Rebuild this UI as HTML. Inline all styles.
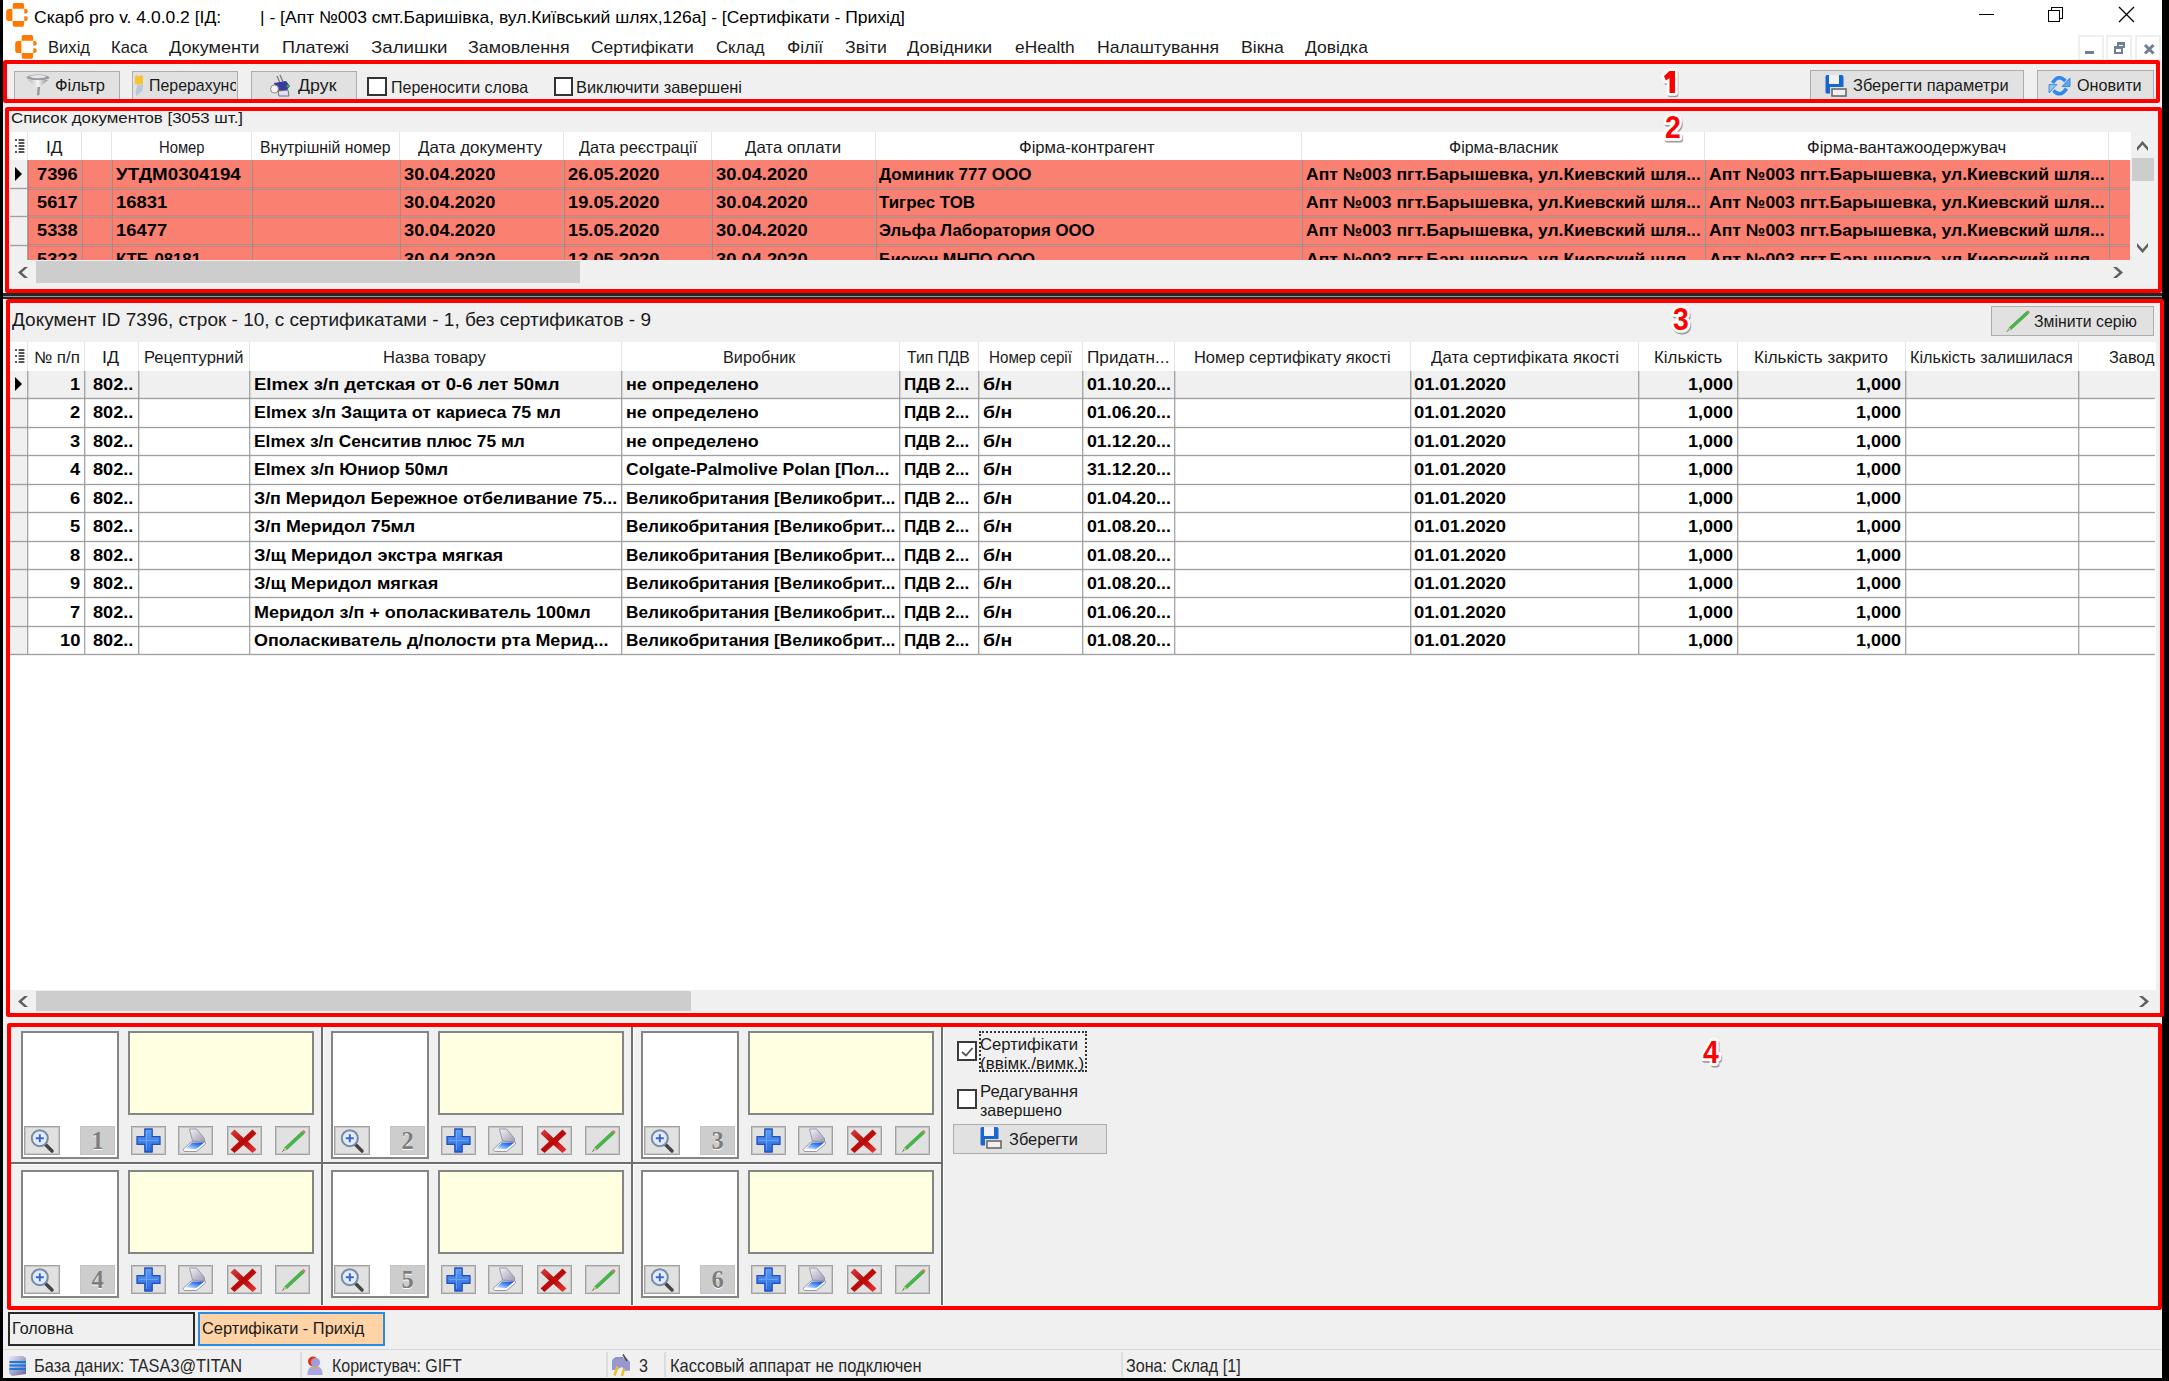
<!DOCTYPE html><html><head><meta charset="utf-8"><style>
html,body{margin:0;padding:0}
body{width:2169px;height:1381px;position:relative;overflow:hidden;background:#f0f0f0;font-family:"Liberation Sans",sans-serif}
.t{position:absolute;white-space:pre;transform-origin:0 0}
.lbl{position:absolute;font-family:"Liberation Sans",sans-serif;font-weight:700;font-size:31px;line-height:31px;color:#ff0000;z-index:60;
 text-shadow:-2px -2px 0 #fff,2px -2px 0 #fff,-2px 2px 0 #fff,2px 2px 0 #fff,0 -3px 0 #fff,0 3px 0 #fff,-3px 0 0 #fff,3px 0 0 #fff,1px 4px 1px #777}
svg{overflow:visible}
</style></head><body>

<div style="position:absolute;left:0px;top:0px;width:2169px;height:61px;background:#fff"></div>
<svg style="position:absolute;left:6px;top:3px" width="22" height="24" viewBox="0 0 22 24"><g fill="#ff7800"><path d="M6.5 5.8 L6.9 1.2 Q7.2 0 8.5 0 L16.3 0 Q17.6 0 17.9 1.2 L18.3 5.8 Z"/><path d="M6.5 18 L6.9 22.6 Q7.2 23.8 8.5 23.8 L16.3 23.8 Q17.6 23.8 17.9 22.6 L18.3 18 Z"/><path d="M6.4 5.9 L6.4 18 L2.6 18 Q0.2 18 0.2 15.5 L0.2 8.4 Q0.2 5.9 2.6 5.9 Z"/><path d="M18.3 5.9 L19.8 5.9 Q21.7 5.9 21.7 8.2 Q21.7 10.6 19.8 10.6 L18.3 10.6 Z"/><path d="M18.3 13.2 L19.8 13.2 Q21.7 13.2 21.7 15.6 Q21.7 17.9 19.8 17.9 L18.3 17.9 Z"/></g></svg>
<svg style="position:absolute;left:15px;top:35px" width="22" height="24" viewBox="0 0 22 24"><g fill="#ff7800"><path d="M6.5 5.8 L6.9 1.2 Q7.2 0 8.5 0 L16.3 0 Q17.6 0 17.9 1.2 L18.3 5.8 Z"/><path d="M6.5 18 L6.9 22.6 Q7.2 23.8 8.5 23.8 L16.3 23.8 Q17.6 23.8 17.9 22.6 L18.3 18 Z"/><path d="M6.4 5.9 L6.4 18 L2.6 18 Q0.2 18 0.2 15.5 L0.2 8.4 Q0.2 5.9 2.6 5.9 Z"/><path d="M18.3 5.9 L19.8 5.9 Q21.7 5.9 21.7 8.2 Q21.7 10.6 19.8 10.6 L18.3 10.6 Z"/><path d="M18.3 13.2 L19.8 13.2 Q21.7 13.2 21.7 15.6 Q21.7 17.9 19.8 17.9 L18.3 17.9 Z"/></g></svg>
<div class="t" style="left:34.0px;top:8.6px;font-size:17px;line-height:17px;font-weight:400;color:#000;transform:scaleX(1.0292)">Скарб pro v. 4.0.0.2 [ІД:        | - [Апт №003 смт.Баришівка, вул.Київський шлях,126а] - [Сертифікати - Прихід]</div>
<div style="position:absolute;left:1979px;top:14px;width:15px;height:1px;background:#000"></div>
<div style="position:absolute;left:2051px;top:7px;width:10px;height:10px;border:1px solid #000;"></div>
<div style="position:absolute;left:2048px;top:10px;width:10px;height:10px;border:1px solid #000;background:#fff"></div>
<svg style="position:absolute;left:2119px;top:7px" width="15" height="15" viewBox="0 0 15 15"><path d="M0 0 L15 15 M15 0 L0 15" stroke="#000" stroke-width="1.3"/></svg>
<div class="t" style="left:48.4px;top:38.7px;font-size:17px;line-height:17px;font-weight:400;color:#1a1a1a;transform:scaleX(0.9767)">Вихід</div>
<div class="t" style="left:111.3px;top:38.7px;font-size:17px;line-height:17px;font-weight:400;color:#1a1a1a;transform:scaleX(0.9759)">Каса</div>
<div class="t" style="left:169.4px;top:38.7px;font-size:17px;line-height:17px;font-weight:400;color:#1a1a1a;transform:scaleX(1.0648)">Документи</div>
<div class="t" style="left:282.4px;top:38.7px;font-size:17px;line-height:17px;font-weight:400;color:#1a1a1a;transform:scaleX(1.0617)">Платежі</div>
<div class="t" style="left:370.5px;top:38.7px;font-size:17px;line-height:17px;font-weight:400;color:#1a1a1a;transform:scaleX(1.0976)">Залишки</div>
<div class="t" style="left:468.0px;top:38.7px;font-size:17px;line-height:17px;font-weight:400;color:#1a1a1a;transform:scaleX(1.0485)">Замовлення</div>
<div class="t" style="left:591.2px;top:38.7px;font-size:17px;line-height:17px;font-weight:400;color:#1a1a1a;transform:scaleX(1.0270)">Сертифікати</div>
<div class="t" style="left:716.0px;top:38.7px;font-size:17px;line-height:17px;font-weight:400;color:#1a1a1a;transform:scaleX(0.9858)">Склад</div>
<div class="t" style="left:786.5px;top:38.7px;font-size:17px;line-height:17px;font-weight:400;color:#1a1a1a;transform:scaleX(1.0285)">Філії</div>
<div class="t" style="left:844.6px;top:38.7px;font-size:17px;line-height:17px;font-weight:400;color:#1a1a1a;transform:scaleX(1.0371)">Звіти</div>
<div class="t" style="left:907.0px;top:38.7px;font-size:17px;line-height:17px;font-weight:400;color:#1a1a1a;transform:scaleX(1.0665)">Довідники</div>
<div class="t" style="left:1014.7px;top:38.7px;font-size:17px;line-height:17px;font-weight:400;color:#1a1a1a;transform:scaleX(1.0188)">eHealth</div>
<div class="t" style="left:1097.0px;top:38.7px;font-size:17px;line-height:17px;font-weight:400;color:#1a1a1a;transform:scaleX(1.0383)">Налаштування</div>
<div class="t" style="left:1240.6px;top:38.7px;font-size:17px;line-height:17px;font-weight:400;color:#1a1a1a;transform:scaleX(1.0362)">Вікна</div>
<div class="t" style="left:1304.5px;top:38.7px;font-size:17px;line-height:17px;font-weight:400;color:#1a1a1a;transform:scaleX(1.0278)">Довідка</div>
<div style="position:absolute;left:2078px;top:35px;width:26px;height:26px;background:#fff;border:2px solid #efefef;box-sizing:border-box"></div>
<div style="position:absolute;left:2106px;top:35px;width:26px;height:26px;background:#fff;border:2px solid #efefef;box-sizing:border-box"></div>
<div style="position:absolute;left:2135px;top:35px;width:26px;height:26px;background:#fff;border:2px solid #efefef;box-sizing:border-box"></div>
<div style="position:absolute;left:2085px;top:51px;width:9px;height:3px;background:#708090"></div>
<div style="position:absolute;left:2117px;top:42px;width:8px;height:6px;border:2px solid #708090;border-top-width:3px;box-sizing:border-box"></div>
<div style="position:absolute;left:2113.5px;top:46px;width:9px;height:8px;border:2px solid #708090;border-top-width:3px;box-sizing:border-box;background:#fff"></div>
<svg style="position:absolute;left:2143.5px;top:43.5px" width="10.5" height="10.5" viewBox="0 0 10.5 10.5"><path d="M1 1 L9.5 9.5 M9.5 1 L1 9.5" stroke="#708090" stroke-width="3"/></svg>
<div style="position:absolute;left:3px;top:61px;width:2159px;height:42px;background:#f0f0f0"></div>
<div style="position:absolute;left:14px;top:71px;width:106px;height:39px;background:#e1e1e1;border:1px solid #adadad;box-sizing:border-box"></div>
<div style="position:absolute;left:132px;top:71px;width:106px;height:39px;background:#e1e1e1;border:1px solid #adadad;box-sizing:border-box"></div>
<div style="position:absolute;left:251px;top:71px;width:106px;height:39px;background:#e1e1e1;border:1px solid #adadad;box-sizing:border-box"></div>
<div class="t" style="left:55.2px;top:76.5px;font-size:17px;line-height:17px;font-weight:400;color:#1a1a1a;transform:scaleX(0.9708)">Фільтр</div>
<div style="position:absolute;left:133px;top:0;width:103px;height:1381px;overflow:hidden"><div style="position:absolute;left:-133px;top:0"><div class="t" style="left:149.4px;top:76.5px;font-size:17px;line-height:17px;font-weight:400;color:#1a1a1a;transform:scaleX(0.9360)">Перерахунок</div></div></div>
<div class="t" style="left:297.8px;top:76.5px;font-size:17px;line-height:17px;font-weight:400;color:#1a1a1a;transform:scaleX(1.0461)">Друк</div>
<div style="position:absolute;left:367px;top:77px;width:20px;height:19px;background:#fff;border:2px solid #333;box-sizing:border-box"></div>
<div class="t" style="left:390.5px;top:78.5px;font-size:16.5px;line-height:16.5px;font-weight:400;color:#1a1a1a;transform:scaleX(0.9696)">Переносити слова</div>
<div style="position:absolute;left:554px;top:77px;width:19px;height:19px;background:#fff;border:2px solid #333;box-sizing:border-box"></div>
<div class="t" style="left:576.0px;top:78.5px;font-size:16.5px;line-height:16.5px;font-weight:400;color:#1a1a1a;transform:scaleX(0.9922)">Виключити завершені</div>
<div style="position:absolute;left:1810px;top:70px;width:214px;height:40px;background:#e1e1e1;border:1px solid #adadad;box-sizing:border-box"></div>
<div style="position:absolute;left:2037px;top:70px;width:117px;height:40px;background:#e1e1e1;border:1px solid #adadad;box-sizing:border-box"></div>
<div class="t" style="left:1853.0px;top:76.5px;font-size:17px;line-height:17px;font-weight:400;color:#1a1a1a;transform:scaleX(0.9647)">Зберегти параметри</div>
<div class="t" style="left:2077.3px;top:76.5px;font-size:17px;line-height:17px;font-weight:400;color:#1a1a1a;transform:scaleX(0.9514)">Оновити</div>
<div style="position:absolute;left:3px;top:60px;width:2149px;height:35px;border:4px solid #ff0000;border-radius:2.5px;z-index:95"></div>
<svg style="position:absolute;left:1663.5px;top:70.7px;z-index:96" width="11" height="22" viewBox="0 0 11 22"><g transform="translate(0.8,1.8)" fill="#777" stroke="#888" stroke-width="5" stroke-linejoin="round" opacity="0.8"><path d="M5.5 0 L11 0 L11 22 L5.5 22 L5.5 7 L1.8 9.6 L0 5 Z"/></g><g fill="#ff0000" stroke="#fff" stroke-width="5.5" stroke-linejoin="round" paint-order="stroke"><path d="M5.5 0 L11 0 L11 22 L5.5 22 L5.5 7 L1.8 9.6 L0 5 Z"/></g></svg>
<svg style="position:absolute;left:26px;top:74px" width="24" height="22" viewBox="0 0 24 22"><defs><linearGradient id="fg" x1="0" x2="1"><stop offset="0" stop-color="#b8bcc0"/><stop offset="0.5" stop-color="#f4f4f4"/><stop offset="1" stop-color="#8c9094"/></linearGradient></defs><ellipse cx="12" cy="3.5" rx="11.5" ry="3" fill="#9a9ea2"/><ellipse cx="12" cy="2.6" rx="8" ry="1.6" fill="#e8e8e8"/><path d="M2 6 L11 14 L13 14 L22 6 Z" fill="url(#fg)"/><path d="M11.5 13 L14 13 L13.5 21 L11 21.5 Z" fill="#9a9a9a"/></svg>
<svg style="position:absolute;left:134.5px;top:75px" width="10" height="22" viewBox="0 0 10 22"><path d="M0 1 L2 0 L4 1.5 L6 0 L8 1 L8 9.5 L0 9.5 Z" fill="#f5c430"/><path d="M2.5 10 L8.5 10 L7 16 L1.5 21 L0.5 17 Z" fill="#b8c8dc"/></svg>
<svg style="position:absolute;left:270px;top:75px" width="22" height="22" viewBox="0 0 22 22"><path d="M7 1 L10 8 M10 0 L13 7" stroke="#777" stroke-width="1.2"/><path d="M4 8 L16 6 L20 11 L17 15 L6 16 Z" fill="#3a3aa0"/><ellipse cx="4.5" cy="14" rx="4" ry="4" fill="#f6f6f6" stroke="#888" stroke-width="1"/><path d="M8 16 L18 15 L19 21 L9 21 Z" fill="#e0e0f4" stroke="#555" stroke-width="0.8"/><circle cx="18" cy="11" r="1.6" fill="#20c020"/></svg>
<svg style="position:absolute;left:1825px;top:74.7px" width="22" height="22" viewBox="0 0 22 22"><path d="M0.5 1.5 Q0.5 0 2 0 L4 0 L4 9 L14 9 L14 0 L16.5 0 Q18.5 0 18.5 2 L18.5 12 L5 12 L5 18.5 L2 18.5 Q0.5 18.5 0.5 17 Z" fill="#1a66d0"/><rect x="4.2" y="0.3" width="9.6" height="8.5" fill="#f2f2f2"/><rect x="7" y="14" width="14" height="7" fill="#f0f0f0" stroke="#6a6a6a" stroke-width="1.6"/></svg>
<svg style="position:absolute;left:2049px;top:75px" width="22" height="22" viewBox="0 0 22 22"><path d="M3.5 8 Q9.5 -1.5 16.5 6" stroke="#2f88ee" stroke-width="3.6" fill="none"/><path d="M13 11.5 L21 11.5 L21 3 Z" fill="#5aa6f4" stroke="#2f7ee0" stroke-width="0.8"/><path d="M17.5 13.5 Q11.5 23 4.5 15.5" stroke="#2f88ee" stroke-width="3.6" fill="none"/><path d="M0 9.5 L8 9.5 L0 18 Z" fill="#8cc4f8" stroke="#2f7ee0" stroke-width="0.8"/></svg>
<div style="position:absolute;left:3px;top:103px;width:2159px;height:4px;background:#f0f0f0"></div>
<div style="position:absolute;left:9px;top:111px;width:2149px;height:178px;background:#f0f0f0"></div>
<div class="t" style="left:11.4px;top:109.7px;font-size:15.5px;line-height:15.5px;font-weight:400;color:#1a1a1a;transform:scaleX(1.0867)">Список документов [3053 шт.]</div>
<div style="position:absolute;left:10px;top:132px;width:2121px;height:28px;background:#fff"></div>
<div style="position:absolute;left:10px;top:160px;width:17px;height:100px;background:#f0f0f0"></div>
<div style="position:absolute;left:27px;top:160px;width:2103px;height:100px;background:#fa8072"></div>
<div style="position:absolute;left:27px;top:132px;width:1px;height:28px;background:#e5e5e5"></div>
<div style="position:absolute;left:81px;top:132px;width:1px;height:28px;background:#e5e5e5"></div>
<div style="position:absolute;left:111px;top:132px;width:1px;height:28px;background:#e5e5e5"></div>
<div style="position:absolute;left:251px;top:132px;width:1px;height:28px;background:#e5e5e5"></div>
<div style="position:absolute;left:399px;top:132px;width:1px;height:28px;background:#e5e5e5"></div>
<div style="position:absolute;left:563px;top:132px;width:1px;height:28px;background:#e5e5e5"></div>
<div style="position:absolute;left:711px;top:132px;width:1px;height:28px;background:#e5e5e5"></div>
<div style="position:absolute;left:875px;top:132px;width:1px;height:28px;background:#e5e5e5"></div>
<div style="position:absolute;left:1301px;top:132px;width:1px;height:28px;background:#e5e5e5"></div>
<div style="position:absolute;left:1704px;top:132px;width:1px;height:28px;background:#e5e5e5"></div>
<div style="position:absolute;left:2108px;top:132px;width:1px;height:28px;background:#e5e5e5"></div>
<div style="position:absolute;left:27px;top:160px;width:1px;height:100px;background:#a4a4a4"></div>
<div style="position:absolute;left:28px;top:160px;width:1px;height:100px;background:rgba(0,0,0,0.1)"></div>
<div style="position:absolute;left:81px;top:160px;width:1px;height:100px;background:#a4a4a4"></div>
<div style="position:absolute;left:82px;top:160px;width:1px;height:100px;background:rgba(0,0,0,0.1)"></div>
<div style="position:absolute;left:111px;top:160px;width:1px;height:100px;background:#a4a4a4"></div>
<div style="position:absolute;left:112px;top:160px;width:1px;height:100px;background:rgba(0,0,0,0.1)"></div>
<div style="position:absolute;left:251px;top:160px;width:1px;height:100px;background:#a4a4a4"></div>
<div style="position:absolute;left:252px;top:160px;width:1px;height:100px;background:rgba(0,0,0,0.1)"></div>
<div style="position:absolute;left:399px;top:160px;width:1px;height:100px;background:#a4a4a4"></div>
<div style="position:absolute;left:400px;top:160px;width:1px;height:100px;background:rgba(0,0,0,0.1)"></div>
<div style="position:absolute;left:563px;top:160px;width:1px;height:100px;background:#a4a4a4"></div>
<div style="position:absolute;left:564px;top:160px;width:1px;height:100px;background:rgba(0,0,0,0.1)"></div>
<div style="position:absolute;left:711px;top:160px;width:1px;height:100px;background:#a4a4a4"></div>
<div style="position:absolute;left:712px;top:160px;width:1px;height:100px;background:rgba(0,0,0,0.1)"></div>
<div style="position:absolute;left:875px;top:160px;width:1px;height:100px;background:#a4a4a4"></div>
<div style="position:absolute;left:876px;top:160px;width:1px;height:100px;background:rgba(0,0,0,0.1)"></div>
<div style="position:absolute;left:1301px;top:160px;width:1px;height:100px;background:#a4a4a4"></div>
<div style="position:absolute;left:1302px;top:160px;width:1px;height:100px;background:rgba(0,0,0,0.1)"></div>
<div style="position:absolute;left:1704px;top:160px;width:1px;height:100px;background:#a4a4a4"></div>
<div style="position:absolute;left:1705px;top:160px;width:1px;height:100px;background:rgba(0,0,0,0.1)"></div>
<div style="position:absolute;left:2108px;top:160px;width:1px;height:100px;background:#a4a4a4"></div>
<div style="position:absolute;left:2109px;top:160px;width:1px;height:100px;background:rgba(0,0,0,0.1)"></div>
<div style="position:absolute;left:10px;top:188px;width:2120px;height:1px;background:#a0a0a0"></div>
<div style="position:absolute;left:10px;top:187px;width:2120px;height:1px;background:rgba(0,0,0,0.06)"></div>
<div style="position:absolute;left:10px;top:189px;width:2120px;height:1px;background:rgba(0,0,0,0.06)"></div>
<div style="position:absolute;left:10px;top:216px;width:2120px;height:1px;background:#a0a0a0"></div>
<div style="position:absolute;left:10px;top:215px;width:2120px;height:1px;background:rgba(0,0,0,0.06)"></div>
<div style="position:absolute;left:10px;top:217px;width:2120px;height:1px;background:rgba(0,0,0,0.06)"></div>
<div style="position:absolute;left:10px;top:245px;width:2120px;height:1px;background:#a0a0a0"></div>
<div style="position:absolute;left:10px;top:244px;width:2120px;height:1px;background:rgba(0,0,0,0.06)"></div>
<div style="position:absolute;left:10px;top:246px;width:2120px;height:1px;background:rgba(0,0,0,0.06)"></div>
<div class="t" style="left:45.6px;top:139.2px;font-size:16.5px;line-height:16.5px;font-weight:400;color:#1a1a1a;transform:scaleX(1.0443)">ІД</div>
<div class="t" style="left:158.5px;top:139.2px;font-size:16.5px;line-height:16.5px;font-weight:400;color:#1a1a1a;transform:scaleX(0.8976)">Номер</div>
<div class="t" style="left:259.9px;top:139.2px;font-size:16.5px;line-height:16.5px;font-weight:400;color:#1a1a1a;transform:scaleX(0.9561)">Внутрішній номер</div>
<div class="t" style="left:418.4px;top:139.2px;font-size:16.5px;line-height:16.5px;font-weight:400;color:#1a1a1a;transform:scaleX(1.0256)">Дата документу</div>
<div class="t" style="left:578.7px;top:139.2px;font-size:16.5px;line-height:16.5px;font-weight:400;color:#1a1a1a;transform:scaleX(0.9875)">Дата реєстрації</div>
<div class="t" style="left:745.3px;top:139.2px;font-size:16.5px;line-height:16.5px;font-weight:400;color:#1a1a1a;transform:scaleX(1.0190)">Дата оплати</div>
<div class="t" style="left:1019.0px;top:139.2px;font-size:16.5px;line-height:16.5px;font-weight:400;color:#1a1a1a;transform:scaleX(1.0074)">Фірма-контрагент</div>
<div class="t" style="left:1448.6px;top:139.2px;font-size:16.5px;line-height:16.5px;font-weight:400;color:#1a1a1a;transform:scaleX(0.9698)">Фірма-власник</div>
<div class="t" style="left:1806.7px;top:139.2px;font-size:16.5px;line-height:16.5px;font-weight:400;color:#1a1a1a;transform:scaleX(1.0101)">Фірма-вантажоодержувач</div>
<div style="position:absolute;left:0;top:0;width:2169px;height:260px;overflow:hidden">
<div class="t" style="left:36.8px;top:165.6px;font-size:17px;line-height:17px;font-weight:700;color:#000;transform:scaleX(1.0714)">7396</div>
<div class="t" style="left:116.1px;top:165.6px;font-size:17px;line-height:17px;font-weight:700;color:#000;transform:scaleX(1.1044)">УТДМ0304194</div>
<div class="t" style="left:404.4px;top:165.6px;font-size:17px;line-height:17px;font-weight:700;color:#000;transform:scaleX(1.0729)">30.04.2020</div>
<div class="t" style="left:567.9px;top:165.6px;font-size:17px;line-height:17px;font-weight:700;color:#000;transform:scaleX(1.0740)">26.05.2020</div>
<div class="t" style="left:716.3px;top:165.6px;font-size:17px;line-height:17px;font-weight:700;color:#000;transform:scaleX(1.0776)">30.04.2020</div>
<div class="t" style="left:879.0px;top:165.6px;font-size:17px;line-height:17px;font-weight:700;color:#000;transform:scaleX(1.0013)">Доминик 777 ООО</div>
<div class="t" style="left:1305.9px;top:165.6px;font-size:17px;line-height:17px;font-weight:700;color:#000;transform:scaleX(1.0327)">Апт №003 пгт.Барышевка, ул.Киевский шля...</div>
<div class="t" style="left:1708.6px;top:165.6px;font-size:17px;line-height:17px;font-weight:700;color:#000;transform:scaleX(1.0348)">Апт №003 пгт.Барышевка, ул.Киевский шля...</div>
<div class="t" style="left:36.8px;top:194.0px;font-size:17px;line-height:17px;font-weight:700;color:#000;transform:scaleX(1.0714)">5617</div>
<div class="t" style="left:116.1px;top:194.0px;font-size:17px;line-height:17px;font-weight:700;color:#000;transform:scaleX(1.0825)">16831</div>
<div class="t" style="left:404.4px;top:194.0px;font-size:17px;line-height:17px;font-weight:700;color:#000;transform:scaleX(1.0729)">30.04.2020</div>
<div class="t" style="left:567.9px;top:194.0px;font-size:17px;line-height:17px;font-weight:700;color:#000;transform:scaleX(1.0740)">19.05.2020</div>
<div class="t" style="left:716.3px;top:194.0px;font-size:17px;line-height:17px;font-weight:700;color:#000;transform:scaleX(1.0776)">30.04.2020</div>
<div class="t" style="left:879.0px;top:194.0px;font-size:17px;line-height:17px;font-weight:700;color:#000;transform:scaleX(0.9948)">Тигрес ТОВ</div>
<div class="t" style="left:1305.9px;top:194.0px;font-size:17px;line-height:17px;font-weight:700;color:#000;transform:scaleX(1.0327)">Апт №003 пгт.Барышевка, ул.Киевский шля...</div>
<div class="t" style="left:1708.6px;top:194.0px;font-size:17px;line-height:17px;font-weight:700;color:#000;transform:scaleX(1.0348)">Апт №003 пгт.Барышевка, ул.Киевский шля...</div>
<div class="t" style="left:36.8px;top:222.4px;font-size:17px;line-height:17px;font-weight:700;color:#000;transform:scaleX(1.0714)">5338</div>
<div class="t" style="left:116.1px;top:222.4px;font-size:17px;line-height:17px;font-weight:700;color:#000;transform:scaleX(1.0825)">16477</div>
<div class="t" style="left:404.4px;top:222.4px;font-size:17px;line-height:17px;font-weight:700;color:#000;transform:scaleX(1.0729)">30.04.2020</div>
<div class="t" style="left:567.9px;top:222.4px;font-size:17px;line-height:17px;font-weight:700;color:#000;transform:scaleX(1.0740)">15.05.2020</div>
<div class="t" style="left:716.3px;top:222.4px;font-size:17px;line-height:17px;font-weight:700;color:#000;transform:scaleX(1.0776)">30.04.2020</div>
<div class="t" style="left:879.0px;top:222.4px;font-size:17px;line-height:17px;font-weight:700;color:#000;transform:scaleX(0.9885)">Эльфа Лаборатория ООО</div>
<div class="t" style="left:1305.9px;top:222.4px;font-size:17px;line-height:17px;font-weight:700;color:#000;transform:scaleX(1.0327)">Апт №003 пгт.Барышевка, ул.Киевский шля...</div>
<div class="t" style="left:1708.6px;top:222.4px;font-size:17px;line-height:17px;font-weight:700;color:#000;transform:scaleX(1.0348)">Апт №003 пгт.Барышевка, ул.Киевский шля...</div>
<div class="t" style="left:36.8px;top:250.8px;font-size:17px;line-height:17px;font-weight:700;color:#000;transform:scaleX(1.0714)">5323</div>
<div class="t" style="left:116.1px;top:250.8px;font-size:17px;line-height:17px;font-weight:700;color:#000;transform:scaleX(0.9838)">КТБ-08181</div>
<div class="t" style="left:404.4px;top:250.8px;font-size:17px;line-height:17px;font-weight:700;color:#000;transform:scaleX(1.0729)">30.04.2020</div>
<div class="t" style="left:567.9px;top:250.8px;font-size:17px;line-height:17px;font-weight:700;color:#000;transform:scaleX(1.0740)">13.05.2020</div>
<div class="t" style="left:716.3px;top:250.8px;font-size:17px;line-height:17px;font-weight:700;color:#000;transform:scaleX(1.0776)">30.04.2020</div>
<div class="t" style="left:879.0px;top:250.8px;font-size:17px;line-height:17px;font-weight:700;color:#000;transform:scaleX(0.9571)">Биокон МНПО ООО</div>
<div class="t" style="left:1305.9px;top:250.8px;font-size:17px;line-height:17px;font-weight:700;color:#000;transform:scaleX(1.0327)">Апт №003 пгт.Барышевка, ул.Киевский шля...</div>
<div class="t" style="left:1708.6px;top:250.8px;font-size:17px;line-height:17px;font-weight:700;color:#000;transform:scaleX(1.0348)">Апт №003 пгт.Барышевка, ул.Киевский шля...</div>
</div>
<svg style="position:absolute;left:15px;top:167px" width="8" height="14" viewBox="0 0 8 14"><path d="M0 0 L7 7 L0 14 z" fill="#000"/></svg>
<svg style="position:absolute;left:15.5px;top:139.2px" width="9" height="14" viewBox="0 0 9 14"><g fill="#1e1e1e"><rect x="2.5" y="0.2" width="6" height="1.6" rx="0.6"/><rect x="2.5" y="3.2" width="6" height="1.6" rx="0.6"/><rect x="2.5" y="6.2" width="6" height="1.6" rx="0.6"/><rect x="2.5" y="9.2" width="6" height="1.6" rx="0.6"/><rect x="2.5" y="12.2" width="6" height="1.6" rx="0.6"/><circle cx="0" cy="1" r="1"/><circle cx="0" cy="7" r="1"/><circle cx="0" cy="13" r="1"/></g></svg>
<div style="position:absolute;left:10px;top:260px;width:2121px;height:28px;background:#f0f0f0"></div>
<div style="position:absolute;left:36px;top:261px;width:544px;height:22px;background:#cdcdcd"></div>
<svg style="position:absolute;left:17.5px;top:267px" width="10" height="11" viewBox="0 0 10 11"><polygon points="10,0 6.3,0 0,5.5 6.3,11 10,11 3.8,5.5" fill="#606060"/></svg>
<svg style="position:absolute;left:2113px;top:267px" width="10" height="11" viewBox="0 0 10 11"><polygon points="0,0 3.7,0 10,5.5 3.7,11 0,11 6.2,5.5" fill="#606060"/></svg>
<div style="position:absolute;left:2131px;top:132px;width:27px;height:128px;background:#f0f0f0"></div>
<div style="position:absolute;left:2132px;top:158px;width:22px;height:23px;background:#cdcdcd"></div>
<svg style="position:absolute;left:2137px;top:141px" width="11" height="10" viewBox="0 0 11 10"><polygon points="0,10 0,6.3 5.5,0 11,6.3 11,10 5.5,3.8" fill="#606060"/></svg>
<svg style="position:absolute;left:2137px;top:243px" width="11" height="10" viewBox="0 0 11 10"><polygon points="0,0 0,3.7 5.5,10 11,3.7 11,0 5.5,6.2" fill="#606060"/></svg>
<div style="position:absolute;left:5px;top:107px;width:2149px;height:178px;border:4px solid #ff0000;border-radius:2.5px;z-index:95"></div>
<svg style="position:absolute;left:1666px;top:116px;z-index:96" width="15" height="22" viewBox="0 0 15 22"><g transform="translate(0.8,1.8)" fill="#777" stroke="#888" stroke-width="5" stroke-linejoin="round" opacity="0.8"><text x="-1" y="22" font-family="Liberation Sans" font-weight="700" font-size="30.5" transform="scale(0.93,1)">2</text></g><g fill="#ff0000" stroke="#fff" stroke-width="5.5" stroke-linejoin="round" paint-order="stroke"><text x="-1" y="22" font-family="Liberation Sans" font-weight="700" font-size="30.5" transform="scale(0.93,1)">2</text></g></svg>
<div style="position:absolute;left:3px;top:293px;width:2159px;height:6px;background:#262626"></div>
<div style="position:absolute;left:3px;top:296px;width:2159px;height:1px;background:#999"></div>
<div style="position:absolute;left:10px;top:303px;width:2148px;height:710px;background:#f0f0f0"></div>
<div class="t" style="left:11.8px;top:311.6px;font-size:17.7px;line-height:17.7px;font-weight:400;color:#1a1a1a;transform:scaleX(1.0739)">Документ ID 7396, строк - 10, с сертификатами - 1, без сертификатов - 9</div>
<div style="position:absolute;left:1991px;top:306px;width:163px;height:30px;background:#e1e1e1;border:1px solid #adadad;box-sizing:border-box"></div>
<div class="t" style="left:2034.0px;top:312.9px;font-size:17px;line-height:17px;font-weight:400;color:#1a1a1a;transform:scaleX(0.9313)">Змінити серію</div>
<div style="position:absolute;left:10px;top:342px;width:2146px;height:648px;background:#fff"></div>
<div style="position:absolute;left:10px;top:371px;width:17px;height:284px;background:#f0f0f0"></div>
<div style="position:absolute;left:27px;top:371px;width:2129px;height:27px;background:#f0f0f0"></div>
<div style="position:absolute;left:27px;top:342px;width:1px;height:29px;background:#e5e5e5"></div>
<div style="position:absolute;left:27px;top:371px;width:1px;height:284px;background:#a8a8a8"></div>
<div style="position:absolute;left:28px;top:371px;width:1px;height:284px;background:rgba(0,0,0,0.12)"></div>
<div style="position:absolute;left:84px;top:342px;width:1px;height:29px;background:#e5e5e5"></div>
<div style="position:absolute;left:84px;top:371px;width:1px;height:284px;background:#a8a8a8"></div>
<div style="position:absolute;left:85px;top:371px;width:1px;height:284px;background:rgba(0,0,0,0.12)"></div>
<div style="position:absolute;left:138px;top:342px;width:1px;height:29px;background:#e5e5e5"></div>
<div style="position:absolute;left:138px;top:371px;width:1px;height:284px;background:#a8a8a8"></div>
<div style="position:absolute;left:139px;top:371px;width:1px;height:284px;background:rgba(0,0,0,0.12)"></div>
<div style="position:absolute;left:249px;top:342px;width:1px;height:29px;background:#e5e5e5"></div>
<div style="position:absolute;left:249px;top:371px;width:1px;height:284px;background:#a8a8a8"></div>
<div style="position:absolute;left:250px;top:371px;width:1px;height:284px;background:rgba(0,0,0,0.12)"></div>
<div style="position:absolute;left:621px;top:342px;width:1px;height:29px;background:#e5e5e5"></div>
<div style="position:absolute;left:621px;top:371px;width:1px;height:284px;background:#a8a8a8"></div>
<div style="position:absolute;left:622px;top:371px;width:1px;height:284px;background:rgba(0,0,0,0.12)"></div>
<div style="position:absolute;left:899px;top:342px;width:1px;height:29px;background:#e5e5e5"></div>
<div style="position:absolute;left:899px;top:371px;width:1px;height:284px;background:#a8a8a8"></div>
<div style="position:absolute;left:900px;top:371px;width:1px;height:284px;background:rgba(0,0,0,0.12)"></div>
<div style="position:absolute;left:978px;top:342px;width:1px;height:29px;background:#e5e5e5"></div>
<div style="position:absolute;left:978px;top:371px;width:1px;height:284px;background:#a8a8a8"></div>
<div style="position:absolute;left:979px;top:371px;width:1px;height:284px;background:rgba(0,0,0,0.12)"></div>
<div style="position:absolute;left:1082px;top:342px;width:1px;height:29px;background:#e5e5e5"></div>
<div style="position:absolute;left:1082px;top:371px;width:1px;height:284px;background:#a8a8a8"></div>
<div style="position:absolute;left:1083px;top:371px;width:1px;height:284px;background:rgba(0,0,0,0.12)"></div>
<div style="position:absolute;left:1174px;top:342px;width:1px;height:29px;background:#e5e5e5"></div>
<div style="position:absolute;left:1174px;top:371px;width:1px;height:284px;background:#a8a8a8"></div>
<div style="position:absolute;left:1175px;top:371px;width:1px;height:284px;background:rgba(0,0,0,0.12)"></div>
<div style="position:absolute;left:1410px;top:342px;width:1px;height:29px;background:#e5e5e5"></div>
<div style="position:absolute;left:1410px;top:371px;width:1px;height:284px;background:#a8a8a8"></div>
<div style="position:absolute;left:1411px;top:371px;width:1px;height:284px;background:rgba(0,0,0,0.12)"></div>
<div style="position:absolute;left:1638px;top:342px;width:1px;height:29px;background:#e5e5e5"></div>
<div style="position:absolute;left:1638px;top:371px;width:1px;height:284px;background:#a8a8a8"></div>
<div style="position:absolute;left:1639px;top:371px;width:1px;height:284px;background:rgba(0,0,0,0.12)"></div>
<div style="position:absolute;left:1737px;top:342px;width:1px;height:29px;background:#e5e5e5"></div>
<div style="position:absolute;left:1737px;top:371px;width:1px;height:284px;background:#a8a8a8"></div>
<div style="position:absolute;left:1738px;top:371px;width:1px;height:284px;background:rgba(0,0,0,0.12)"></div>
<div style="position:absolute;left:1905px;top:342px;width:1px;height:29px;background:#e5e5e5"></div>
<div style="position:absolute;left:1905px;top:371px;width:1px;height:284px;background:#a8a8a8"></div>
<div style="position:absolute;left:1906px;top:371px;width:1px;height:284px;background:rgba(0,0,0,0.12)"></div>
<div style="position:absolute;left:2078px;top:342px;width:1px;height:29px;background:#e5e5e5"></div>
<div style="position:absolute;left:2078px;top:371px;width:1px;height:284px;background:#a8a8a8"></div>
<div style="position:absolute;left:2079px;top:371px;width:1px;height:284px;background:rgba(0,0,0,0.12)"></div>
<div style="position:absolute;left:10px;top:398px;width:2145px;height:1px;background:#a0a0a0"></div>
<div style="position:absolute;left:10px;top:397px;width:2145px;height:1px;background:rgba(0,0,0,0.06)"></div>
<div style="position:absolute;left:10px;top:399px;width:2145px;height:1px;background:rgba(0,0,0,0.06)"></div>
<div style="position:absolute;left:10px;top:427px;width:2145px;height:1px;background:#a0a0a0"></div>
<div style="position:absolute;left:10px;top:426px;width:2145px;height:1px;background:rgba(0,0,0,0.06)"></div>
<div style="position:absolute;left:10px;top:428px;width:2145px;height:1px;background:rgba(0,0,0,0.06)"></div>
<div style="position:absolute;left:10px;top:455px;width:2145px;height:1px;background:#a0a0a0"></div>
<div style="position:absolute;left:10px;top:454px;width:2145px;height:1px;background:rgba(0,0,0,0.06)"></div>
<div style="position:absolute;left:10px;top:456px;width:2145px;height:1px;background:rgba(0,0,0,0.06)"></div>
<div style="position:absolute;left:10px;top:484px;width:2145px;height:1px;background:#a0a0a0"></div>
<div style="position:absolute;left:10px;top:483px;width:2145px;height:1px;background:rgba(0,0,0,0.06)"></div>
<div style="position:absolute;left:10px;top:485px;width:2145px;height:1px;background:rgba(0,0,0,0.06)"></div>
<div style="position:absolute;left:10px;top:512px;width:2145px;height:1px;background:#a0a0a0"></div>
<div style="position:absolute;left:10px;top:511px;width:2145px;height:1px;background:rgba(0,0,0,0.06)"></div>
<div style="position:absolute;left:10px;top:513px;width:2145px;height:1px;background:rgba(0,0,0,0.06)"></div>
<div style="position:absolute;left:10px;top:541px;width:2145px;height:1px;background:#a0a0a0"></div>
<div style="position:absolute;left:10px;top:540px;width:2145px;height:1px;background:rgba(0,0,0,0.06)"></div>
<div style="position:absolute;left:10px;top:542px;width:2145px;height:1px;background:rgba(0,0,0,0.06)"></div>
<div style="position:absolute;left:10px;top:569px;width:2145px;height:1px;background:#a0a0a0"></div>
<div style="position:absolute;left:10px;top:568px;width:2145px;height:1px;background:rgba(0,0,0,0.06)"></div>
<div style="position:absolute;left:10px;top:570px;width:2145px;height:1px;background:rgba(0,0,0,0.06)"></div>
<div style="position:absolute;left:10px;top:597px;width:2145px;height:1px;background:#a0a0a0"></div>
<div style="position:absolute;left:10px;top:596px;width:2145px;height:1px;background:rgba(0,0,0,0.06)"></div>
<div style="position:absolute;left:10px;top:598px;width:2145px;height:1px;background:rgba(0,0,0,0.06)"></div>
<div style="position:absolute;left:10px;top:626px;width:2145px;height:1px;background:#a0a0a0"></div>
<div style="position:absolute;left:10px;top:625px;width:2145px;height:1px;background:rgba(0,0,0,0.06)"></div>
<div style="position:absolute;left:10px;top:627px;width:2145px;height:1px;background:rgba(0,0,0,0.06)"></div>
<div style="position:absolute;left:10px;top:654px;width:2145px;height:1px;background:#a0a0a0"></div>
<div style="position:absolute;left:10px;top:653px;width:2145px;height:1px;background:rgba(0,0,0,0.06)"></div>
<div style="position:absolute;left:10px;top:655px;width:2145px;height:1px;background:rgba(0,0,0,0.06)"></div>
<div class="t" style="left:33.9px;top:349.2px;font-size:16.5px;line-height:16.5px;font-weight:400;color:#1a1a1a;transform:scaleX(1.0246)">№ п/п</div>
<div class="t" style="left:102.4px;top:349.2px;font-size:16.5px;line-height:16.5px;font-weight:400;color:#1a1a1a;transform:scaleX(1.0823)">ІД</div>
<div class="t" style="left:144.0px;top:349.2px;font-size:16.5px;line-height:16.5px;font-weight:400;color:#1a1a1a;transform:scaleX(1.0000)">Рецептурний</div>
<div class="t" style="left:382.7px;top:349.2px;font-size:16.5px;line-height:16.5px;font-weight:400;color:#1a1a1a;transform:scaleX(1.0029)">Назва товару</div>
<div class="t" style="left:723.1px;top:349.2px;font-size:16.5px;line-height:16.5px;font-weight:400;color:#1a1a1a;transform:scaleX(0.9837)">Виробник</div>
<div class="t" style="left:906.5px;top:349.2px;font-size:16.5px;line-height:16.5px;font-weight:400;color:#1a1a1a;transform:scaleX(0.9501)">Тип ПДВ</div>
<div class="t" style="left:988.7px;top:349.2px;font-size:16.5px;line-height:16.5px;font-weight:400;color:#1a1a1a;transform:scaleX(0.9191)">Номер серії</div>
<div class="t" style="left:1086.9px;top:349.2px;font-size:16.5px;line-height:16.5px;font-weight:400;color:#1a1a1a;transform:scaleX(1.0417)">Придатн...</div>
<div class="t" style="left:1194.4px;top:349.2px;font-size:16.5px;line-height:16.5px;font-weight:400;color:#1a1a1a;transform:scaleX(0.9949)">Номер сертифікату якості</div>
<div class="t" style="left:1430.9px;top:349.2px;font-size:16.5px;line-height:16.5px;font-weight:400;color:#1a1a1a;transform:scaleX(1.0218)">Дата сертифіката якості</div>
<div class="t" style="left:1653.6px;top:349.2px;font-size:16.5px;line-height:16.5px;font-weight:400;color:#1a1a1a;transform:scaleX(1.0210)">Кількість</div>
<div class="t" style="left:1754.0px;top:349.2px;font-size:16.5px;line-height:16.5px;font-weight:400;color:#1a1a1a;transform:scaleX(1.0284)">Кількість закрито</div>
<div class="t" style="left:1910.3px;top:349.2px;font-size:16.5px;line-height:16.5px;font-weight:400;color:#1a1a1a;transform:scaleX(0.9837)">Кількість залишилася</div>
<div class="t" style="left:2109.4px;top:349.2px;font-size:16.5px;line-height:16.5px;font-weight:400;color:#1a1a1a;transform:scaleX(0.9870)">Завод</div>
<div class="t" style="left:70.3px;top:375.9px;font-size:17px;line-height:17px;font-weight:700;color:#000;transform:scaleX(1.0748)">1</div>
<div class="t" style="left:93.0px;top:375.9px;font-size:17px;line-height:17px;font-weight:700;color:#000;transform:scaleX(1.0688)">802..</div>
<div class="t" style="left:253.8px;top:375.9px;font-size:17px;line-height:17px;font-weight:700;color:#000;transform:scaleX(1.0884)">Elmex з/п детская от 0-6 лет 50мл</div>
<div class="t" style="left:625.7px;top:375.9px;font-size:17px;line-height:17px;font-weight:700;color:#000;transform:scaleX(1.0548)">не определено</div>
<div class="t" style="left:903.5px;top:375.9px;font-size:17px;line-height:17px;font-weight:700;color:#000;transform:scaleX(1.0031)">ПДВ 2...</div>
<div class="t" style="left:983.0px;top:375.9px;font-size:17px;line-height:17px;font-weight:700;color:#000;transform:scaleX(1.1451)">б/н</div>
<div class="t" style="left:1086.9px;top:375.9px;font-size:17px;line-height:17px;font-weight:700;color:#000;transform:scaleX(1.0436)">01.10.20...</div>
<div class="t" style="left:1414.4px;top:375.9px;font-size:17px;line-height:17px;font-weight:700;color:#000;transform:scaleX(1.0823)">01.01.2020</div>
<div class="t" style="left:1688.3px;top:375.9px;font-size:17px;line-height:17px;font-weight:700;color:#000;transform:scaleX(1.0588)">1,000</div>
<div class="t" style="left:1856.3px;top:375.9px;font-size:17px;line-height:17px;font-weight:700;color:#000;transform:scaleX(1.0588)">1,000</div>
<div class="t" style="left:70.3px;top:404.4px;font-size:17px;line-height:17px;font-weight:700;color:#000;transform:scaleX(1.0748)">2</div>
<div class="t" style="left:93.0px;top:404.4px;font-size:17px;line-height:17px;font-weight:700;color:#000;transform:scaleX(1.0688)">802..</div>
<div class="t" style="left:253.8px;top:404.4px;font-size:17px;line-height:17px;font-weight:700;color:#000;transform:scaleX(1.0496)">Elmex з/п Защита от кариеса 75 мл</div>
<div class="t" style="left:625.7px;top:404.4px;font-size:17px;line-height:17px;font-weight:700;color:#000;transform:scaleX(1.0548)">не определено</div>
<div class="t" style="left:903.5px;top:404.4px;font-size:17px;line-height:17px;font-weight:700;color:#000;transform:scaleX(1.0031)">ПДВ 2...</div>
<div class="t" style="left:983.0px;top:404.4px;font-size:17px;line-height:17px;font-weight:700;color:#000;transform:scaleX(1.1451)">б/н</div>
<div class="t" style="left:1086.9px;top:404.4px;font-size:17px;line-height:17px;font-weight:700;color:#000;transform:scaleX(1.0436)">01.06.20...</div>
<div class="t" style="left:1414.4px;top:404.4px;font-size:17px;line-height:17px;font-weight:700;color:#000;transform:scaleX(1.0823)">01.01.2020</div>
<div class="t" style="left:1688.3px;top:404.4px;font-size:17px;line-height:17px;font-weight:700;color:#000;transform:scaleX(1.0588)">1,000</div>
<div class="t" style="left:1856.3px;top:404.4px;font-size:17px;line-height:17px;font-weight:700;color:#000;transform:scaleX(1.0588)">1,000</div>
<div class="t" style="left:70.3px;top:432.8px;font-size:17px;line-height:17px;font-weight:700;color:#000;transform:scaleX(1.0748)">3</div>
<div class="t" style="left:93.0px;top:432.8px;font-size:17px;line-height:17px;font-weight:700;color:#000;transform:scaleX(1.0688)">802..</div>
<div class="t" style="left:253.8px;top:432.8px;font-size:17px;line-height:17px;font-weight:700;color:#000;transform:scaleX(1.0203)">Elmex з/п Сенситив плюс 75 мл</div>
<div class="t" style="left:625.7px;top:432.8px;font-size:17px;line-height:17px;font-weight:700;color:#000;transform:scaleX(1.0548)">не определено</div>
<div class="t" style="left:903.5px;top:432.8px;font-size:17px;line-height:17px;font-weight:700;color:#000;transform:scaleX(1.0031)">ПДВ 2...</div>
<div class="t" style="left:983.0px;top:432.8px;font-size:17px;line-height:17px;font-weight:700;color:#000;transform:scaleX(1.1451)">б/н</div>
<div class="t" style="left:1086.9px;top:432.8px;font-size:17px;line-height:17px;font-weight:700;color:#000;transform:scaleX(1.0436)">01.12.20...</div>
<div class="t" style="left:1414.4px;top:432.8px;font-size:17px;line-height:17px;font-weight:700;color:#000;transform:scaleX(1.0823)">01.01.2020</div>
<div class="t" style="left:1688.3px;top:432.8px;font-size:17px;line-height:17px;font-weight:700;color:#000;transform:scaleX(1.0588)">1,000</div>
<div class="t" style="left:1856.3px;top:432.8px;font-size:17px;line-height:17px;font-weight:700;color:#000;transform:scaleX(1.0588)">1,000</div>
<div class="t" style="left:70.3px;top:461.3px;font-size:17px;line-height:17px;font-weight:700;color:#000;transform:scaleX(1.0748)">4</div>
<div class="t" style="left:93.0px;top:461.3px;font-size:17px;line-height:17px;font-weight:700;color:#000;transform:scaleX(1.0688)">802..</div>
<div class="t" style="left:253.8px;top:461.3px;font-size:17px;line-height:17px;font-weight:700;color:#000;transform:scaleX(1.0275)">Elmex з/п Юниор 50мл</div>
<div class="t" style="left:625.7px;top:461.3px;font-size:17px;line-height:17px;font-weight:700;color:#000;transform:scaleX(1.0289)">Colgate-Palmolive Polan [Пол...</div>
<div class="t" style="left:903.5px;top:461.3px;font-size:17px;line-height:17px;font-weight:700;color:#000;transform:scaleX(1.0031)">ПДВ 2...</div>
<div class="t" style="left:983.0px;top:461.3px;font-size:17px;line-height:17px;font-weight:700;color:#000;transform:scaleX(1.1451)">б/н</div>
<div class="t" style="left:1086.9px;top:461.3px;font-size:17px;line-height:17px;font-weight:700;color:#000;transform:scaleX(1.0436)">31.12.20...</div>
<div class="t" style="left:1414.4px;top:461.3px;font-size:17px;line-height:17px;font-weight:700;color:#000;transform:scaleX(1.0823)">01.01.2020</div>
<div class="t" style="left:1688.3px;top:461.3px;font-size:17px;line-height:17px;font-weight:700;color:#000;transform:scaleX(1.0588)">1,000</div>
<div class="t" style="left:1856.3px;top:461.3px;font-size:17px;line-height:17px;font-weight:700;color:#000;transform:scaleX(1.0588)">1,000</div>
<div class="t" style="left:70.3px;top:489.8px;font-size:17px;line-height:17px;font-weight:700;color:#000;transform:scaleX(1.0748)">6</div>
<div class="t" style="left:93.0px;top:489.8px;font-size:17px;line-height:17px;font-weight:700;color:#000;transform:scaleX(1.0688)">802..</div>
<div class="t" style="left:253.8px;top:489.8px;font-size:17px;line-height:17px;font-weight:700;color:#000;transform:scaleX(1.0485)">З/п Меридол Бережное отбеливание 75...</div>
<div class="t" style="left:625.7px;top:489.8px;font-size:17px;line-height:17px;font-weight:700;color:#000;transform:scaleX(1.0132)">Великобритания [Великобрит...</div>
<div class="t" style="left:903.5px;top:489.8px;font-size:17px;line-height:17px;font-weight:700;color:#000;transform:scaleX(1.0031)">ПДВ 2...</div>
<div class="t" style="left:983.0px;top:489.8px;font-size:17px;line-height:17px;font-weight:700;color:#000;transform:scaleX(1.1451)">б/н</div>
<div class="t" style="left:1086.9px;top:489.8px;font-size:17px;line-height:17px;font-weight:700;color:#000;transform:scaleX(1.0436)">01.04.20...</div>
<div class="t" style="left:1414.4px;top:489.8px;font-size:17px;line-height:17px;font-weight:700;color:#000;transform:scaleX(1.0823)">01.01.2020</div>
<div class="t" style="left:1688.3px;top:489.8px;font-size:17px;line-height:17px;font-weight:700;color:#000;transform:scaleX(1.0588)">1,000</div>
<div class="t" style="left:1856.3px;top:489.8px;font-size:17px;line-height:17px;font-weight:700;color:#000;transform:scaleX(1.0588)">1,000</div>
<div class="t" style="left:70.3px;top:518.3px;font-size:17px;line-height:17px;font-weight:700;color:#000;transform:scaleX(1.0748)">5</div>
<div class="t" style="left:93.0px;top:518.3px;font-size:17px;line-height:17px;font-weight:700;color:#000;transform:scaleX(1.0688)">802..</div>
<div class="t" style="left:253.8px;top:518.3px;font-size:17px;line-height:17px;font-weight:700;color:#000;transform:scaleX(1.0508)">З/п Меридол 75мл</div>
<div class="t" style="left:625.7px;top:518.3px;font-size:17px;line-height:17px;font-weight:700;color:#000;transform:scaleX(1.0132)">Великобритания [Великобрит...</div>
<div class="t" style="left:903.5px;top:518.3px;font-size:17px;line-height:17px;font-weight:700;color:#000;transform:scaleX(1.0031)">ПДВ 2...</div>
<div class="t" style="left:983.0px;top:518.3px;font-size:17px;line-height:17px;font-weight:700;color:#000;transform:scaleX(1.1451)">б/н</div>
<div class="t" style="left:1086.9px;top:518.3px;font-size:17px;line-height:17px;font-weight:700;color:#000;transform:scaleX(1.0436)">01.08.20...</div>
<div class="t" style="left:1414.4px;top:518.3px;font-size:17px;line-height:17px;font-weight:700;color:#000;transform:scaleX(1.0823)">01.01.2020</div>
<div class="t" style="left:1688.3px;top:518.3px;font-size:17px;line-height:17px;font-weight:700;color:#000;transform:scaleX(1.0588)">1,000</div>
<div class="t" style="left:1856.3px;top:518.3px;font-size:17px;line-height:17px;font-weight:700;color:#000;transform:scaleX(1.0588)">1,000</div>
<div class="t" style="left:70.3px;top:546.7px;font-size:17px;line-height:17px;font-weight:700;color:#000;transform:scaleX(1.0748)">8</div>
<div class="t" style="left:93.0px;top:546.7px;font-size:17px;line-height:17px;font-weight:700;color:#000;transform:scaleX(1.0688)">802..</div>
<div class="t" style="left:253.8px;top:546.7px;font-size:17px;line-height:17px;font-weight:700;color:#000;transform:scaleX(1.0714)">З/щ Меридол экстра мягкая</div>
<div class="t" style="left:625.7px;top:546.7px;font-size:17px;line-height:17px;font-weight:700;color:#000;transform:scaleX(1.0132)">Великобритания [Великобрит...</div>
<div class="t" style="left:903.5px;top:546.7px;font-size:17px;line-height:17px;font-weight:700;color:#000;transform:scaleX(1.0031)">ПДВ 2...</div>
<div class="t" style="left:983.0px;top:546.7px;font-size:17px;line-height:17px;font-weight:700;color:#000;transform:scaleX(1.1451)">б/н</div>
<div class="t" style="left:1086.9px;top:546.7px;font-size:17px;line-height:17px;font-weight:700;color:#000;transform:scaleX(1.0436)">01.08.20...</div>
<div class="t" style="left:1414.4px;top:546.7px;font-size:17px;line-height:17px;font-weight:700;color:#000;transform:scaleX(1.0823)">01.01.2020</div>
<div class="t" style="left:1688.3px;top:546.7px;font-size:17px;line-height:17px;font-weight:700;color:#000;transform:scaleX(1.0588)">1,000</div>
<div class="t" style="left:1856.3px;top:546.7px;font-size:17px;line-height:17px;font-weight:700;color:#000;transform:scaleX(1.0588)">1,000</div>
<div class="t" style="left:70.3px;top:575.2px;font-size:17px;line-height:17px;font-weight:700;color:#000;transform:scaleX(1.0748)">9</div>
<div class="t" style="left:93.0px;top:575.2px;font-size:17px;line-height:17px;font-weight:700;color:#000;transform:scaleX(1.0688)">802..</div>
<div class="t" style="left:253.8px;top:575.2px;font-size:17px;line-height:17px;font-weight:700;color:#000;transform:scaleX(1.0672)">З/щ Меридол мягкая</div>
<div class="t" style="left:625.7px;top:575.2px;font-size:17px;line-height:17px;font-weight:700;color:#000;transform:scaleX(1.0132)">Великобритания [Великобрит...</div>
<div class="t" style="left:903.5px;top:575.2px;font-size:17px;line-height:17px;font-weight:700;color:#000;transform:scaleX(1.0031)">ПДВ 2...</div>
<div class="t" style="left:983.0px;top:575.2px;font-size:17px;line-height:17px;font-weight:700;color:#000;transform:scaleX(1.1451)">б/н</div>
<div class="t" style="left:1086.9px;top:575.2px;font-size:17px;line-height:17px;font-weight:700;color:#000;transform:scaleX(1.0436)">01.08.20...</div>
<div class="t" style="left:1414.4px;top:575.2px;font-size:17px;line-height:17px;font-weight:700;color:#000;transform:scaleX(1.0823)">01.01.2020</div>
<div class="t" style="left:1688.3px;top:575.2px;font-size:17px;line-height:17px;font-weight:700;color:#000;transform:scaleX(1.0588)">1,000</div>
<div class="t" style="left:1856.3px;top:575.2px;font-size:17px;line-height:17px;font-weight:700;color:#000;transform:scaleX(1.0588)">1,000</div>
<div class="t" style="left:70.3px;top:603.7px;font-size:17px;line-height:17px;font-weight:700;color:#000;transform:scaleX(1.0748)">7</div>
<div class="t" style="left:93.0px;top:603.7px;font-size:17px;line-height:17px;font-weight:700;color:#000;transform:scaleX(1.0688)">802..</div>
<div class="t" style="left:253.8px;top:603.7px;font-size:17px;line-height:17px;font-weight:700;color:#000;transform:scaleX(1.0591)">Меридол з/п + ополаскиватель 100мл</div>
<div class="t" style="left:625.7px;top:603.7px;font-size:17px;line-height:17px;font-weight:700;color:#000;transform:scaleX(1.0132)">Великобритания [Великобрит...</div>
<div class="t" style="left:903.5px;top:603.7px;font-size:17px;line-height:17px;font-weight:700;color:#000;transform:scaleX(1.0031)">ПДВ 2...</div>
<div class="t" style="left:983.0px;top:603.7px;font-size:17px;line-height:17px;font-weight:700;color:#000;transform:scaleX(1.1451)">б/н</div>
<div class="t" style="left:1086.9px;top:603.7px;font-size:17px;line-height:17px;font-weight:700;color:#000;transform:scaleX(1.0436)">01.06.20...</div>
<div class="t" style="left:1414.4px;top:603.7px;font-size:17px;line-height:17px;font-weight:700;color:#000;transform:scaleX(1.0823)">01.01.2020</div>
<div class="t" style="left:1688.3px;top:603.7px;font-size:17px;line-height:17px;font-weight:700;color:#000;transform:scaleX(1.0588)">1,000</div>
<div class="t" style="left:1856.3px;top:603.7px;font-size:17px;line-height:17px;font-weight:700;color:#000;transform:scaleX(1.0588)">1,000</div>
<div class="t" style="left:60.1px;top:632.1px;font-size:17px;line-height:17px;font-weight:700;color:#000;transform:scaleX(1.0805)">10</div>
<div class="t" style="left:93.0px;top:632.1px;font-size:17px;line-height:17px;font-weight:700;color:#000;transform:scaleX(1.0688)">802..</div>
<div class="t" style="left:253.8px;top:632.1px;font-size:17px;line-height:17px;font-weight:700;color:#000;transform:scaleX(1.0516)">Ополаскиватель д/полости рта Мерид...</div>
<div class="t" style="left:625.7px;top:632.1px;font-size:17px;line-height:17px;font-weight:700;color:#000;transform:scaleX(1.0132)">Великобритания [Великобрит...</div>
<div class="t" style="left:903.5px;top:632.1px;font-size:17px;line-height:17px;font-weight:700;color:#000;transform:scaleX(1.0031)">ПДВ 2...</div>
<div class="t" style="left:983.0px;top:632.1px;font-size:17px;line-height:17px;font-weight:700;color:#000;transform:scaleX(1.1451)">б/н</div>
<div class="t" style="left:1086.9px;top:632.1px;font-size:17px;line-height:17px;font-weight:700;color:#000;transform:scaleX(1.0436)">01.08.20...</div>
<div class="t" style="left:1414.4px;top:632.1px;font-size:17px;line-height:17px;font-weight:700;color:#000;transform:scaleX(1.0823)">01.01.2020</div>
<div class="t" style="left:1688.3px;top:632.1px;font-size:17px;line-height:17px;font-weight:700;color:#000;transform:scaleX(1.0588)">1,000</div>
<div class="t" style="left:1856.3px;top:632.1px;font-size:17px;line-height:17px;font-weight:700;color:#000;transform:scaleX(1.0588)">1,000</div>
<svg style="position:absolute;left:15px;top:377px" width="8" height="14" viewBox="0 0 8 14"><path d="M0 0 L7 7 L0 14 z" fill="#000"/></svg>
<svg style="position:absolute;left:15.5px;top:349.2px" width="9" height="14" viewBox="0 0 9 14"><g fill="#1e1e1e"><rect x="2.5" y="0.2" width="6" height="1.6" rx="0.6"/><rect x="2.5" y="3.2" width="6" height="1.6" rx="0.6"/><rect x="2.5" y="6.2" width="6" height="1.6" rx="0.6"/><rect x="2.5" y="9.2" width="6" height="1.6" rx="0.6"/><rect x="2.5" y="12.2" width="6" height="1.6" rx="0.6"/><circle cx="0" cy="1" r="1"/><circle cx="0" cy="7" r="1"/><circle cx="0" cy="13" r="1"/></g></svg>
<div style="position:absolute;left:10px;top:990px;width:2146px;height:22px;background:#f0f0f0"></div>
<div style="position:absolute;left:36px;top:991px;width:655px;height:20px;background:#cdcdcd"></div>
<svg style="position:absolute;left:17.5px;top:996px" width="10" height="11" viewBox="0 0 10 11"><polygon points="10,0 6.3,0 0,5.5 6.3,11 10,11 3.8,5.5" fill="#606060"/></svg>
<svg style="position:absolute;left:2139px;top:996px" width="10" height="11" viewBox="0 0 10 11"><polygon points="0,0 3.7,0 10,5.5 3.7,11 0,11 6.2,5.5" fill="#606060"/></svg>
<div style="position:absolute;left:6px;top:299px;width:2150px;height:710px;border:4px solid #ff0000;border-radius:2.5px;z-index:95"></div>
<svg style="position:absolute;left:1673.6px;top:307.8px;z-index:96" width="15" height="22" viewBox="0 0 15 22"><g transform="translate(0.8,1.8)" fill="#777" stroke="#888" stroke-width="5" stroke-linejoin="round" opacity="0.8"><text x="-1" y="22" font-family="Liberation Sans" font-weight="700" font-size="30.5" transform="scale(0.93,1)">3</text></g><g fill="#ff0000" stroke="#fff" stroke-width="5.5" stroke-linejoin="round" paint-order="stroke"><text x="-1" y="22" font-family="Liberation Sans" font-weight="700" font-size="30.5" transform="scale(0.93,1)">3</text></g></svg>
<div style="position:absolute;left:3px;top:1017px;width:2159px;height:6px;background:#f0f0f0"></div>
<div style="position:absolute;left:11px;top:1027px;width:2146px;height:278px;background:#f0f0f0"></div>
<div style="position:absolute;left:321px;top:1027px;width:2px;height:278px;background:#6e6e6e"></div>
<div style="position:absolute;left:323px;top:1027px;width:1px;height:278px;background:#ffffff"></div>
<div style="position:absolute;left:631px;top:1027px;width:2px;height:278px;background:#6e6e6e"></div>
<div style="position:absolute;left:633px;top:1027px;width:1px;height:278px;background:#ffffff"></div>
<div style="position:absolute;left:941px;top:1027px;width:2px;height:278px;background:#6e6e6e"></div>
<div style="position:absolute;left:943px;top:1027px;width:1px;height:278px;background:#ffffff"></div>
<div style="position:absolute;left:11px;top:1162px;width:930px;height:2px;background:#6e6e6e"></div>
<div style="position:absolute;left:11px;top:1164px;width:930px;height:1px;background:#ffffff"></div>
<div style="position:absolute;left:321px;top:1162px;width:2px;height:3px;background:#6e6e6e"></div>
<div style="position:absolute;left:631px;top:1162px;width:2px;height:3px;background:#6e6e6e"></div>
<div style="position:absolute;left:21px;top:1031px;width:98px;height:128px;background:#fff;border:2px solid #858585;box-sizing:border-box"></div>
<div style="position:absolute;left:128px;top:1031px;width:186px;height:84px;background:#ffffe1;border:2px solid #858585;box-sizing:border-box"></div>
<div style="position:absolute;left:24px;top:1126px;width:36px;height:29px;background:#e1e1e1;border:1px solid #a2a2a2;box-shadow:inset 0 0 0 1px #c6c6c6;box-sizing:border-box"></div>
<div style="position:absolute;left:80px;top:1126px;width:35px;height:29px;background:#cdcdcd;border:1px solid #c4c4c4;box-sizing:border-box"></div>
<div class="t" style="left:80px;top:1129px;width:35px;text-align:center;font-family:'Liberation Serif',serif;font-weight:700;font-size:24.5px;line-height:24.5px;color:#7d7d7d;text-shadow:0 1px 0 #fff">1</div>
<div style="position:absolute;left:131px;top:1126px;width:35px;height:29px;background:#e1e1e1;border:1px solid #a2a2a2;box-shadow:inset 0 0 0 1px #c6c6c6;box-sizing:border-box"></div>
<div style="position:absolute;left:178px;top:1126px;width:35px;height:29px;background:#e1e1e1;border:1px solid #a2a2a2;box-shadow:inset 0 0 0 1px #c6c6c6;box-sizing:border-box"></div>
<div style="position:absolute;left:227px;top:1126px;width:35px;height:29px;background:#e1e1e1;border:1px solid #a2a2a2;box-shadow:inset 0 0 0 1px #c6c6c6;box-sizing:border-box"></div>
<div style="position:absolute;left:275px;top:1126px;width:35px;height:29px;background:#e1e1e1;border:1px solid #a2a2a2;box-shadow:inset 0 0 0 1px #c6c6c6;box-sizing:border-box"></div>
<svg style="position:absolute;left:29px;top:1128px" width="26" height="26" viewBox="0 0 26 26"><defs><radialGradient id="mg"><stop offset="0" stop-color="#ffffff"/><stop offset="1" stop-color="#cfe0ff"/></radialGradient></defs><path d="M15 15 L23 23" stroke="#444" stroke-width="3.5" stroke-linecap="round"/><circle cx="10.8" cy="10.2" r="8" fill="url(#mg)" stroke="#7a8ca0" stroke-width="2"/><path d="M10.8 6.2 v8 M6.8 10.2 h8" stroke="#3a62d8" stroke-width="2"/></svg>
<svg style="position:absolute;left:136px;top:1128px" width="26" height="26" viewBox="0 0 26 26"><defs><linearGradient id="pg" x1="0" y1="0" x2="0" y2="1"><stop offset="0" stop-color="#5fa0f8"/><stop offset="1" stop-color="#2a6ad8"/></linearGradient></defs><path d="M8.8 1 H16.2 V8.6 H24 V16.4 H16.2 V24 H8.8 V16.4 H1 V8.6 H8.8 Z" fill="url(#pg)" stroke="#2050c0" stroke-width="1.3" stroke-linejoin="round"/><path d="M10.5 3 V22 M3 12.5 H22" stroke="#7ab8ff" stroke-width="1" opacity="0.6"/></svg>
<svg style="position:absolute;left:182px;top:1128px" width="26" height="26" viewBox="0 0 26 26"><defs><linearGradient id="sg" x1="0" y1="1" x2="1" y2="0"><stop offset="0" stop-color="#e8f6ff"/><stop offset="0.6" stop-color="#3a80f0"/><stop offset="1" stop-color="#1a40c8"/></linearGradient><linearGradient id="lg" x1="0" y1="0" x2="1" y2="1"><stop offset="0" stop-color="#f4f4fa"/><stop offset="1" stop-color="#9a9ab0"/></linearGradient></defs><path d="M7.5 1 L14.5 1 L22.5 10.5 L22.5 14 L10.5 13 Z" fill="url(#lg)" stroke="#8a8a9a" stroke-width="0.8"/><path d="M1 21.5 L9 14 L23 13.5 L23.5 16 L14.5 23.5 L2.5 23.5 Z" fill="#fafafa" stroke="#909098" stroke-width="0.9"/><path d="M3.5 20.5 L10 14.8 L22.5 14.2 L14 21.2 Z" fill="url(#sg)"/></svg>
<svg style="position:absolute;left:230px;top:1128px" width="28" height="26" viewBox="0 0 28 26"><defs><linearGradient id="xg" x1="0" y1="0" x2="1" y2="1"><stop offset="0" stop-color="#d84040"/><stop offset="0.5" stop-color="#b80808"/><stop offset="1" stop-color="#f03838"/></linearGradient></defs><path d="M4.5 1.5 L13.5 10 L22.5 1.5 L26.5 5.5 L18 13.5 L26.5 21.5 L22.5 25 L13.5 17 L4.5 25 L0.5 21.5 L9 13.5 L0.5 5.5 Z" fill="url(#xg)"/></svg>
<svg style="position:absolute;left:279px;top:1128px" width="28" height="26" viewBox="0 0 28 26"><path d="M4.5 22 L5.8 19.4 L23.2 3.2 L25.4 5.4 L8 21.6 Z" fill="#44b844" stroke="#2a8a2a" stroke-width="0.5"/><path d="M23.2 3.2 L25.4 5.4 L26.8 4 L24.6 1.8 Z" fill="#e87070"/><path d="M4.5 22 L5.8 19.4 L8 21.6 Z" fill="#e8c878"/><path d="M2.5 24.5 L4.5 22 L5.2 22.6 Z" fill="#333"/></svg>
<div style="position:absolute;left:331px;top:1031px;width:98px;height:128px;background:#fff;border:2px solid #858585;box-sizing:border-box"></div>
<div style="position:absolute;left:438px;top:1031px;width:186px;height:84px;background:#ffffe1;border:2px solid #858585;box-sizing:border-box"></div>
<div style="position:absolute;left:334px;top:1126px;width:36px;height:29px;background:#e1e1e1;border:1px solid #a2a2a2;box-shadow:inset 0 0 0 1px #c6c6c6;box-sizing:border-box"></div>
<div style="position:absolute;left:390px;top:1126px;width:35px;height:29px;background:#cdcdcd;border:1px solid #c4c4c4;box-sizing:border-box"></div>
<div class="t" style="left:390px;top:1129px;width:35px;text-align:center;font-family:'Liberation Serif',serif;font-weight:700;font-size:24.5px;line-height:24.5px;color:#7d7d7d;text-shadow:0 1px 0 #fff">2</div>
<div style="position:absolute;left:441px;top:1126px;width:35px;height:29px;background:#e1e1e1;border:1px solid #a2a2a2;box-shadow:inset 0 0 0 1px #c6c6c6;box-sizing:border-box"></div>
<div style="position:absolute;left:488px;top:1126px;width:35px;height:29px;background:#e1e1e1;border:1px solid #a2a2a2;box-shadow:inset 0 0 0 1px #c6c6c6;box-sizing:border-box"></div>
<div style="position:absolute;left:537px;top:1126px;width:35px;height:29px;background:#e1e1e1;border:1px solid #a2a2a2;box-shadow:inset 0 0 0 1px #c6c6c6;box-sizing:border-box"></div>
<div style="position:absolute;left:585px;top:1126px;width:35px;height:29px;background:#e1e1e1;border:1px solid #a2a2a2;box-shadow:inset 0 0 0 1px #c6c6c6;box-sizing:border-box"></div>
<svg style="position:absolute;left:339px;top:1128px" width="26" height="26" viewBox="0 0 26 26"><defs><radialGradient id="mg"><stop offset="0" stop-color="#ffffff"/><stop offset="1" stop-color="#cfe0ff"/></radialGradient></defs><path d="M15 15 L23 23" stroke="#444" stroke-width="3.5" stroke-linecap="round"/><circle cx="10.8" cy="10.2" r="8" fill="url(#mg)" stroke="#7a8ca0" stroke-width="2"/><path d="M10.8 6.2 v8 M6.8 10.2 h8" stroke="#3a62d8" stroke-width="2"/></svg>
<svg style="position:absolute;left:446px;top:1128px" width="26" height="26" viewBox="0 0 26 26"><defs><linearGradient id="pg" x1="0" y1="0" x2="0" y2="1"><stop offset="0" stop-color="#5fa0f8"/><stop offset="1" stop-color="#2a6ad8"/></linearGradient></defs><path d="M8.8 1 H16.2 V8.6 H24 V16.4 H16.2 V24 H8.8 V16.4 H1 V8.6 H8.8 Z" fill="url(#pg)" stroke="#2050c0" stroke-width="1.3" stroke-linejoin="round"/><path d="M10.5 3 V22 M3 12.5 H22" stroke="#7ab8ff" stroke-width="1" opacity="0.6"/></svg>
<svg style="position:absolute;left:492px;top:1128px" width="26" height="26" viewBox="0 0 26 26"><defs><linearGradient id="sg" x1="0" y1="1" x2="1" y2="0"><stop offset="0" stop-color="#e8f6ff"/><stop offset="0.6" stop-color="#3a80f0"/><stop offset="1" stop-color="#1a40c8"/></linearGradient><linearGradient id="lg" x1="0" y1="0" x2="1" y2="1"><stop offset="0" stop-color="#f4f4fa"/><stop offset="1" stop-color="#9a9ab0"/></linearGradient></defs><path d="M7.5 1 L14.5 1 L22.5 10.5 L22.5 14 L10.5 13 Z" fill="url(#lg)" stroke="#8a8a9a" stroke-width="0.8"/><path d="M1 21.5 L9 14 L23 13.5 L23.5 16 L14.5 23.5 L2.5 23.5 Z" fill="#fafafa" stroke="#909098" stroke-width="0.9"/><path d="M3.5 20.5 L10 14.8 L22.5 14.2 L14 21.2 Z" fill="url(#sg)"/></svg>
<svg style="position:absolute;left:540px;top:1128px" width="28" height="26" viewBox="0 0 28 26"><defs><linearGradient id="xg" x1="0" y1="0" x2="1" y2="1"><stop offset="0" stop-color="#d84040"/><stop offset="0.5" stop-color="#b80808"/><stop offset="1" stop-color="#f03838"/></linearGradient></defs><path d="M4.5 1.5 L13.5 10 L22.5 1.5 L26.5 5.5 L18 13.5 L26.5 21.5 L22.5 25 L13.5 17 L4.5 25 L0.5 21.5 L9 13.5 L0.5 5.5 Z" fill="url(#xg)"/></svg>
<svg style="position:absolute;left:589px;top:1128px" width="28" height="26" viewBox="0 0 28 26"><path d="M4.5 22 L5.8 19.4 L23.2 3.2 L25.4 5.4 L8 21.6 Z" fill="#44b844" stroke="#2a8a2a" stroke-width="0.5"/><path d="M23.2 3.2 L25.4 5.4 L26.8 4 L24.6 1.8 Z" fill="#e87070"/><path d="M4.5 22 L5.8 19.4 L8 21.6 Z" fill="#e8c878"/><path d="M2.5 24.5 L4.5 22 L5.2 22.6 Z" fill="#333"/></svg>
<div style="position:absolute;left:641px;top:1031px;width:98px;height:128px;background:#fff;border:2px solid #858585;box-sizing:border-box"></div>
<div style="position:absolute;left:748px;top:1031px;width:186px;height:84px;background:#ffffe1;border:2px solid #858585;box-sizing:border-box"></div>
<div style="position:absolute;left:644px;top:1126px;width:36px;height:29px;background:#e1e1e1;border:1px solid #a2a2a2;box-shadow:inset 0 0 0 1px #c6c6c6;box-sizing:border-box"></div>
<div style="position:absolute;left:700px;top:1126px;width:35px;height:29px;background:#cdcdcd;border:1px solid #c4c4c4;box-sizing:border-box"></div>
<div class="t" style="left:700px;top:1129px;width:35px;text-align:center;font-family:'Liberation Serif',serif;font-weight:700;font-size:24.5px;line-height:24.5px;color:#7d7d7d;text-shadow:0 1px 0 #fff">3</div>
<div style="position:absolute;left:751px;top:1126px;width:35px;height:29px;background:#e1e1e1;border:1px solid #a2a2a2;box-shadow:inset 0 0 0 1px #c6c6c6;box-sizing:border-box"></div>
<div style="position:absolute;left:798px;top:1126px;width:35px;height:29px;background:#e1e1e1;border:1px solid #a2a2a2;box-shadow:inset 0 0 0 1px #c6c6c6;box-sizing:border-box"></div>
<div style="position:absolute;left:847px;top:1126px;width:35px;height:29px;background:#e1e1e1;border:1px solid #a2a2a2;box-shadow:inset 0 0 0 1px #c6c6c6;box-sizing:border-box"></div>
<div style="position:absolute;left:895px;top:1126px;width:35px;height:29px;background:#e1e1e1;border:1px solid #a2a2a2;box-shadow:inset 0 0 0 1px #c6c6c6;box-sizing:border-box"></div>
<svg style="position:absolute;left:649px;top:1128px" width="26" height="26" viewBox="0 0 26 26"><defs><radialGradient id="mg"><stop offset="0" stop-color="#ffffff"/><stop offset="1" stop-color="#cfe0ff"/></radialGradient></defs><path d="M15 15 L23 23" stroke="#444" stroke-width="3.5" stroke-linecap="round"/><circle cx="10.8" cy="10.2" r="8" fill="url(#mg)" stroke="#7a8ca0" stroke-width="2"/><path d="M10.8 6.2 v8 M6.8 10.2 h8" stroke="#3a62d8" stroke-width="2"/></svg>
<svg style="position:absolute;left:756px;top:1128px" width="26" height="26" viewBox="0 0 26 26"><defs><linearGradient id="pg" x1="0" y1="0" x2="0" y2="1"><stop offset="0" stop-color="#5fa0f8"/><stop offset="1" stop-color="#2a6ad8"/></linearGradient></defs><path d="M8.8 1 H16.2 V8.6 H24 V16.4 H16.2 V24 H8.8 V16.4 H1 V8.6 H8.8 Z" fill="url(#pg)" stroke="#2050c0" stroke-width="1.3" stroke-linejoin="round"/><path d="M10.5 3 V22 M3 12.5 H22" stroke="#7ab8ff" stroke-width="1" opacity="0.6"/></svg>
<svg style="position:absolute;left:802px;top:1128px" width="26" height="26" viewBox="0 0 26 26"><defs><linearGradient id="sg" x1="0" y1="1" x2="1" y2="0"><stop offset="0" stop-color="#e8f6ff"/><stop offset="0.6" stop-color="#3a80f0"/><stop offset="1" stop-color="#1a40c8"/></linearGradient><linearGradient id="lg" x1="0" y1="0" x2="1" y2="1"><stop offset="0" stop-color="#f4f4fa"/><stop offset="1" stop-color="#9a9ab0"/></linearGradient></defs><path d="M7.5 1 L14.5 1 L22.5 10.5 L22.5 14 L10.5 13 Z" fill="url(#lg)" stroke="#8a8a9a" stroke-width="0.8"/><path d="M1 21.5 L9 14 L23 13.5 L23.5 16 L14.5 23.5 L2.5 23.5 Z" fill="#fafafa" stroke="#909098" stroke-width="0.9"/><path d="M3.5 20.5 L10 14.8 L22.5 14.2 L14 21.2 Z" fill="url(#sg)"/></svg>
<svg style="position:absolute;left:850px;top:1128px" width="28" height="26" viewBox="0 0 28 26"><defs><linearGradient id="xg" x1="0" y1="0" x2="1" y2="1"><stop offset="0" stop-color="#d84040"/><stop offset="0.5" stop-color="#b80808"/><stop offset="1" stop-color="#f03838"/></linearGradient></defs><path d="M4.5 1.5 L13.5 10 L22.5 1.5 L26.5 5.5 L18 13.5 L26.5 21.5 L22.5 25 L13.5 17 L4.5 25 L0.5 21.5 L9 13.5 L0.5 5.5 Z" fill="url(#xg)"/></svg>
<svg style="position:absolute;left:899px;top:1128px" width="28" height="26" viewBox="0 0 28 26"><path d="M4.5 22 L5.8 19.4 L23.2 3.2 L25.4 5.4 L8 21.6 Z" fill="#44b844" stroke="#2a8a2a" stroke-width="0.5"/><path d="M23.2 3.2 L25.4 5.4 L26.8 4 L24.6 1.8 Z" fill="#e87070"/><path d="M4.5 22 L5.8 19.4 L8 21.6 Z" fill="#e8c878"/><path d="M2.5 24.5 L4.5 22 L5.2 22.6 Z" fill="#333"/></svg>
<div style="position:absolute;left:21px;top:1170px;width:98px;height:128px;background:#fff;border:2px solid #858585;box-sizing:border-box"></div>
<div style="position:absolute;left:128px;top:1170px;width:186px;height:84px;background:#ffffe1;border:2px solid #858585;box-sizing:border-box"></div>
<div style="position:absolute;left:24px;top:1265px;width:36px;height:29px;background:#e1e1e1;border:1px solid #a2a2a2;box-shadow:inset 0 0 0 1px #c6c6c6;box-sizing:border-box"></div>
<div style="position:absolute;left:80px;top:1265px;width:35px;height:29px;background:#cdcdcd;border:1px solid #c4c4c4;box-sizing:border-box"></div>
<div class="t" style="left:80px;top:1268px;width:35px;text-align:center;font-family:'Liberation Serif',serif;font-weight:700;font-size:24.5px;line-height:24.5px;color:#7d7d7d;text-shadow:0 1px 0 #fff">4</div>
<div style="position:absolute;left:131px;top:1265px;width:35px;height:29px;background:#e1e1e1;border:1px solid #a2a2a2;box-shadow:inset 0 0 0 1px #c6c6c6;box-sizing:border-box"></div>
<div style="position:absolute;left:178px;top:1265px;width:35px;height:29px;background:#e1e1e1;border:1px solid #a2a2a2;box-shadow:inset 0 0 0 1px #c6c6c6;box-sizing:border-box"></div>
<div style="position:absolute;left:227px;top:1265px;width:35px;height:29px;background:#e1e1e1;border:1px solid #a2a2a2;box-shadow:inset 0 0 0 1px #c6c6c6;box-sizing:border-box"></div>
<div style="position:absolute;left:275px;top:1265px;width:35px;height:29px;background:#e1e1e1;border:1px solid #a2a2a2;box-shadow:inset 0 0 0 1px #c6c6c6;box-sizing:border-box"></div>
<svg style="position:absolute;left:29px;top:1267px" width="26" height="26" viewBox="0 0 26 26"><defs><radialGradient id="mg"><stop offset="0" stop-color="#ffffff"/><stop offset="1" stop-color="#cfe0ff"/></radialGradient></defs><path d="M15 15 L23 23" stroke="#444" stroke-width="3.5" stroke-linecap="round"/><circle cx="10.8" cy="10.2" r="8" fill="url(#mg)" stroke="#7a8ca0" stroke-width="2"/><path d="M10.8 6.2 v8 M6.8 10.2 h8" stroke="#3a62d8" stroke-width="2"/></svg>
<svg style="position:absolute;left:136px;top:1267px" width="26" height="26" viewBox="0 0 26 26"><defs><linearGradient id="pg" x1="0" y1="0" x2="0" y2="1"><stop offset="0" stop-color="#5fa0f8"/><stop offset="1" stop-color="#2a6ad8"/></linearGradient></defs><path d="M8.8 1 H16.2 V8.6 H24 V16.4 H16.2 V24 H8.8 V16.4 H1 V8.6 H8.8 Z" fill="url(#pg)" stroke="#2050c0" stroke-width="1.3" stroke-linejoin="round"/><path d="M10.5 3 V22 M3 12.5 H22" stroke="#7ab8ff" stroke-width="1" opacity="0.6"/></svg>
<svg style="position:absolute;left:182px;top:1267px" width="26" height="26" viewBox="0 0 26 26"><defs><linearGradient id="sg" x1="0" y1="1" x2="1" y2="0"><stop offset="0" stop-color="#e8f6ff"/><stop offset="0.6" stop-color="#3a80f0"/><stop offset="1" stop-color="#1a40c8"/></linearGradient><linearGradient id="lg" x1="0" y1="0" x2="1" y2="1"><stop offset="0" stop-color="#f4f4fa"/><stop offset="1" stop-color="#9a9ab0"/></linearGradient></defs><path d="M7.5 1 L14.5 1 L22.5 10.5 L22.5 14 L10.5 13 Z" fill="url(#lg)" stroke="#8a8a9a" stroke-width="0.8"/><path d="M1 21.5 L9 14 L23 13.5 L23.5 16 L14.5 23.5 L2.5 23.5 Z" fill="#fafafa" stroke="#909098" stroke-width="0.9"/><path d="M3.5 20.5 L10 14.8 L22.5 14.2 L14 21.2 Z" fill="url(#sg)"/></svg>
<svg style="position:absolute;left:230px;top:1267px" width="28" height="26" viewBox="0 0 28 26"><defs><linearGradient id="xg" x1="0" y1="0" x2="1" y2="1"><stop offset="0" stop-color="#d84040"/><stop offset="0.5" stop-color="#b80808"/><stop offset="1" stop-color="#f03838"/></linearGradient></defs><path d="M4.5 1.5 L13.5 10 L22.5 1.5 L26.5 5.5 L18 13.5 L26.5 21.5 L22.5 25 L13.5 17 L4.5 25 L0.5 21.5 L9 13.5 L0.5 5.5 Z" fill="url(#xg)"/></svg>
<svg style="position:absolute;left:279px;top:1267px" width="28" height="26" viewBox="0 0 28 26"><path d="M4.5 22 L5.8 19.4 L23.2 3.2 L25.4 5.4 L8 21.6 Z" fill="#44b844" stroke="#2a8a2a" stroke-width="0.5"/><path d="M23.2 3.2 L25.4 5.4 L26.8 4 L24.6 1.8 Z" fill="#e87070"/><path d="M4.5 22 L5.8 19.4 L8 21.6 Z" fill="#e8c878"/><path d="M2.5 24.5 L4.5 22 L5.2 22.6 Z" fill="#333"/></svg>
<div style="position:absolute;left:331px;top:1170px;width:98px;height:128px;background:#fff;border:2px solid #858585;box-sizing:border-box"></div>
<div style="position:absolute;left:438px;top:1170px;width:186px;height:84px;background:#ffffe1;border:2px solid #858585;box-sizing:border-box"></div>
<div style="position:absolute;left:334px;top:1265px;width:36px;height:29px;background:#e1e1e1;border:1px solid #a2a2a2;box-shadow:inset 0 0 0 1px #c6c6c6;box-sizing:border-box"></div>
<div style="position:absolute;left:390px;top:1265px;width:35px;height:29px;background:#cdcdcd;border:1px solid #c4c4c4;box-sizing:border-box"></div>
<div class="t" style="left:390px;top:1268px;width:35px;text-align:center;font-family:'Liberation Serif',serif;font-weight:700;font-size:24.5px;line-height:24.5px;color:#7d7d7d;text-shadow:0 1px 0 #fff">5</div>
<div style="position:absolute;left:441px;top:1265px;width:35px;height:29px;background:#e1e1e1;border:1px solid #a2a2a2;box-shadow:inset 0 0 0 1px #c6c6c6;box-sizing:border-box"></div>
<div style="position:absolute;left:488px;top:1265px;width:35px;height:29px;background:#e1e1e1;border:1px solid #a2a2a2;box-shadow:inset 0 0 0 1px #c6c6c6;box-sizing:border-box"></div>
<div style="position:absolute;left:537px;top:1265px;width:35px;height:29px;background:#e1e1e1;border:1px solid #a2a2a2;box-shadow:inset 0 0 0 1px #c6c6c6;box-sizing:border-box"></div>
<div style="position:absolute;left:585px;top:1265px;width:35px;height:29px;background:#e1e1e1;border:1px solid #a2a2a2;box-shadow:inset 0 0 0 1px #c6c6c6;box-sizing:border-box"></div>
<svg style="position:absolute;left:339px;top:1267px" width="26" height="26" viewBox="0 0 26 26"><defs><radialGradient id="mg"><stop offset="0" stop-color="#ffffff"/><stop offset="1" stop-color="#cfe0ff"/></radialGradient></defs><path d="M15 15 L23 23" stroke="#444" stroke-width="3.5" stroke-linecap="round"/><circle cx="10.8" cy="10.2" r="8" fill="url(#mg)" stroke="#7a8ca0" stroke-width="2"/><path d="M10.8 6.2 v8 M6.8 10.2 h8" stroke="#3a62d8" stroke-width="2"/></svg>
<svg style="position:absolute;left:446px;top:1267px" width="26" height="26" viewBox="0 0 26 26"><defs><linearGradient id="pg" x1="0" y1="0" x2="0" y2="1"><stop offset="0" stop-color="#5fa0f8"/><stop offset="1" stop-color="#2a6ad8"/></linearGradient></defs><path d="M8.8 1 H16.2 V8.6 H24 V16.4 H16.2 V24 H8.8 V16.4 H1 V8.6 H8.8 Z" fill="url(#pg)" stroke="#2050c0" stroke-width="1.3" stroke-linejoin="round"/><path d="M10.5 3 V22 M3 12.5 H22" stroke="#7ab8ff" stroke-width="1" opacity="0.6"/></svg>
<svg style="position:absolute;left:492px;top:1267px" width="26" height="26" viewBox="0 0 26 26"><defs><linearGradient id="sg" x1="0" y1="1" x2="1" y2="0"><stop offset="0" stop-color="#e8f6ff"/><stop offset="0.6" stop-color="#3a80f0"/><stop offset="1" stop-color="#1a40c8"/></linearGradient><linearGradient id="lg" x1="0" y1="0" x2="1" y2="1"><stop offset="0" stop-color="#f4f4fa"/><stop offset="1" stop-color="#9a9ab0"/></linearGradient></defs><path d="M7.5 1 L14.5 1 L22.5 10.5 L22.5 14 L10.5 13 Z" fill="url(#lg)" stroke="#8a8a9a" stroke-width="0.8"/><path d="M1 21.5 L9 14 L23 13.5 L23.5 16 L14.5 23.5 L2.5 23.5 Z" fill="#fafafa" stroke="#909098" stroke-width="0.9"/><path d="M3.5 20.5 L10 14.8 L22.5 14.2 L14 21.2 Z" fill="url(#sg)"/></svg>
<svg style="position:absolute;left:540px;top:1267px" width="28" height="26" viewBox="0 0 28 26"><defs><linearGradient id="xg" x1="0" y1="0" x2="1" y2="1"><stop offset="0" stop-color="#d84040"/><stop offset="0.5" stop-color="#b80808"/><stop offset="1" stop-color="#f03838"/></linearGradient></defs><path d="M4.5 1.5 L13.5 10 L22.5 1.5 L26.5 5.5 L18 13.5 L26.5 21.5 L22.5 25 L13.5 17 L4.5 25 L0.5 21.5 L9 13.5 L0.5 5.5 Z" fill="url(#xg)"/></svg>
<svg style="position:absolute;left:589px;top:1267px" width="28" height="26" viewBox="0 0 28 26"><path d="M4.5 22 L5.8 19.4 L23.2 3.2 L25.4 5.4 L8 21.6 Z" fill="#44b844" stroke="#2a8a2a" stroke-width="0.5"/><path d="M23.2 3.2 L25.4 5.4 L26.8 4 L24.6 1.8 Z" fill="#e87070"/><path d="M4.5 22 L5.8 19.4 L8 21.6 Z" fill="#e8c878"/><path d="M2.5 24.5 L4.5 22 L5.2 22.6 Z" fill="#333"/></svg>
<div style="position:absolute;left:641px;top:1170px;width:98px;height:128px;background:#fff;border:2px solid #858585;box-sizing:border-box"></div>
<div style="position:absolute;left:748px;top:1170px;width:186px;height:84px;background:#ffffe1;border:2px solid #858585;box-sizing:border-box"></div>
<div style="position:absolute;left:644px;top:1265px;width:36px;height:29px;background:#e1e1e1;border:1px solid #a2a2a2;box-shadow:inset 0 0 0 1px #c6c6c6;box-sizing:border-box"></div>
<div style="position:absolute;left:700px;top:1265px;width:35px;height:29px;background:#cdcdcd;border:1px solid #c4c4c4;box-sizing:border-box"></div>
<div class="t" style="left:700px;top:1268px;width:35px;text-align:center;font-family:'Liberation Serif',serif;font-weight:700;font-size:24.5px;line-height:24.5px;color:#7d7d7d;text-shadow:0 1px 0 #fff">6</div>
<div style="position:absolute;left:751px;top:1265px;width:35px;height:29px;background:#e1e1e1;border:1px solid #a2a2a2;box-shadow:inset 0 0 0 1px #c6c6c6;box-sizing:border-box"></div>
<div style="position:absolute;left:798px;top:1265px;width:35px;height:29px;background:#e1e1e1;border:1px solid #a2a2a2;box-shadow:inset 0 0 0 1px #c6c6c6;box-sizing:border-box"></div>
<div style="position:absolute;left:847px;top:1265px;width:35px;height:29px;background:#e1e1e1;border:1px solid #a2a2a2;box-shadow:inset 0 0 0 1px #c6c6c6;box-sizing:border-box"></div>
<div style="position:absolute;left:895px;top:1265px;width:35px;height:29px;background:#e1e1e1;border:1px solid #a2a2a2;box-shadow:inset 0 0 0 1px #c6c6c6;box-sizing:border-box"></div>
<svg style="position:absolute;left:649px;top:1267px" width="26" height="26" viewBox="0 0 26 26"><defs><radialGradient id="mg"><stop offset="0" stop-color="#ffffff"/><stop offset="1" stop-color="#cfe0ff"/></radialGradient></defs><path d="M15 15 L23 23" stroke="#444" stroke-width="3.5" stroke-linecap="round"/><circle cx="10.8" cy="10.2" r="8" fill="url(#mg)" stroke="#7a8ca0" stroke-width="2"/><path d="M10.8 6.2 v8 M6.8 10.2 h8" stroke="#3a62d8" stroke-width="2"/></svg>
<svg style="position:absolute;left:756px;top:1267px" width="26" height="26" viewBox="0 0 26 26"><defs><linearGradient id="pg" x1="0" y1="0" x2="0" y2="1"><stop offset="0" stop-color="#5fa0f8"/><stop offset="1" stop-color="#2a6ad8"/></linearGradient></defs><path d="M8.8 1 H16.2 V8.6 H24 V16.4 H16.2 V24 H8.8 V16.4 H1 V8.6 H8.8 Z" fill="url(#pg)" stroke="#2050c0" stroke-width="1.3" stroke-linejoin="round"/><path d="M10.5 3 V22 M3 12.5 H22" stroke="#7ab8ff" stroke-width="1" opacity="0.6"/></svg>
<svg style="position:absolute;left:802px;top:1267px" width="26" height="26" viewBox="0 0 26 26"><defs><linearGradient id="sg" x1="0" y1="1" x2="1" y2="0"><stop offset="0" stop-color="#e8f6ff"/><stop offset="0.6" stop-color="#3a80f0"/><stop offset="1" stop-color="#1a40c8"/></linearGradient><linearGradient id="lg" x1="0" y1="0" x2="1" y2="1"><stop offset="0" stop-color="#f4f4fa"/><stop offset="1" stop-color="#9a9ab0"/></linearGradient></defs><path d="M7.5 1 L14.5 1 L22.5 10.5 L22.5 14 L10.5 13 Z" fill="url(#lg)" stroke="#8a8a9a" stroke-width="0.8"/><path d="M1 21.5 L9 14 L23 13.5 L23.5 16 L14.5 23.5 L2.5 23.5 Z" fill="#fafafa" stroke="#909098" stroke-width="0.9"/><path d="M3.5 20.5 L10 14.8 L22.5 14.2 L14 21.2 Z" fill="url(#sg)"/></svg>
<svg style="position:absolute;left:850px;top:1267px" width="28" height="26" viewBox="0 0 28 26"><defs><linearGradient id="xg" x1="0" y1="0" x2="1" y2="1"><stop offset="0" stop-color="#d84040"/><stop offset="0.5" stop-color="#b80808"/><stop offset="1" stop-color="#f03838"/></linearGradient></defs><path d="M4.5 1.5 L13.5 10 L22.5 1.5 L26.5 5.5 L18 13.5 L26.5 21.5 L22.5 25 L13.5 17 L4.5 25 L0.5 21.5 L9 13.5 L0.5 5.5 Z" fill="url(#xg)"/></svg>
<svg style="position:absolute;left:899px;top:1267px" width="28" height="26" viewBox="0 0 28 26"><path d="M4.5 22 L5.8 19.4 L23.2 3.2 L25.4 5.4 L8 21.6 Z" fill="#44b844" stroke="#2a8a2a" stroke-width="0.5"/><path d="M23.2 3.2 L25.4 5.4 L26.8 4 L24.6 1.8 Z" fill="#e87070"/><path d="M4.5 22 L5.8 19.4 L8 21.6 Z" fill="#e8c878"/><path d="M2.5 24.5 L4.5 22 L5.2 22.6 Z" fill="#333"/></svg>
<div style="position:absolute;left:957px;top:1041px;width:20px;height:20px;background:#fff;border:2px solid #3a3a3a;box-sizing:border-box"></div>
<svg style="position:absolute;left:959px;top:1043px" width="16" height="16" viewBox="0 0 16 16"><path d="M3 9 L7 12.5 L13.5 5" stroke="#555" stroke-width="1.8" fill="none"/></svg>
<div style="position:absolute;left:979px;top:1031px;width:108px;height:41px;border:2px dotted #333;box-sizing:border-box"></div>
<div class="t" style="left:980.0px;top:1036.0px;font-size:16.5px;line-height:16.5px;font-weight:400;color:#1a1a1a;transform:scaleX(1.0093)">Сертифікати</div>
<div class="t" style="left:980.0px;top:1055.0px;font-size:16.5px;line-height:16.5px;font-weight:400;color:#1a1a1a;transform:scaleX(1.0297)">(ввімк./вимк.)</div>
<div style="position:absolute;left:957px;top:1089px;width:20px;height:20px;background:#fff;border:2px solid #3a3a3a;box-sizing:border-box"></div>
<div class="t" style="left:980.0px;top:1083.0px;font-size:16.5px;line-height:16.5px;font-weight:400;color:#1a1a1a;transform:scaleX(1.0093)">Редагування</div>
<div class="t" style="left:980.0px;top:1102.0px;font-size:16.5px;line-height:16.5px;font-weight:400;color:#1a1a1a;transform:scaleX(0.9716)">завершено</div>
<div style="position:absolute;left:953px;top:1124px;width:154px;height:30px;background:#e1e1e1;border:1px solid #adadad;box-sizing:border-box"></div>
<div class="t" style="left:1009.0px;top:1130.6px;font-size:17px;line-height:17px;font-weight:400;color:#1a1a1a;transform:scaleX(0.9623)">Зберегти</div>
<div style="position:absolute;left:7px;top:1023px;width:2147px;height:279px;border:4px solid #ff0000;border-radius:2.5px;z-index:95"></div>
<svg style="position:absolute;left:1704px;top:1040.7px;z-index:96" width="15" height="22" viewBox="0 0 15 22"><g transform="translate(0.8,1.8)" fill="#777" stroke="#888" stroke-width="5" stroke-linejoin="round" opacity="0.8"><text x="-1" y="22" font-family="Liberation Sans" font-weight="700" font-size="30.5" transform="scale(0.93,1)">4</text></g><g fill="#ff0000" stroke="#fff" stroke-width="5.5" stroke-linejoin="round" paint-order="stroke"><text x="-1" y="22" font-family="Liberation Sans" font-weight="700" font-size="30.5" transform="scale(0.93,1)">4</text></g></svg>
<div style="position:absolute;left:8px;top:1312px;width:183px;height:30px;border:2px solid #282828"></div>
<div class="t" style="left:12.3px;top:1320.3px;font-size:16.5px;line-height:16.5px;font-weight:400;color:#1a1a1a;transform:scaleX(0.9777)">Головна</div>
<div style="position:absolute;left:198px;top:1312px;width:183px;height:30px;border:2px solid #2a8ce0;background:#ffd3a6"></div>
<div class="t" style="left:201.7px;top:1320.3px;font-size:16.5px;line-height:16.5px;font-weight:400;color:#1a1a1a;transform:scaleX(0.9921)">Сертифікати - Прихід</div>
<div style="position:absolute;left:3px;top:1349px;width:2159px;height:1px;background:#d8d8d8"></div>
<div style="position:absolute;left:300px;top:1352px;width:2px;height:25px;background:#dcdcdc"></div>
<div style="position:absolute;left:606px;top:1352px;width:2px;height:25px;background:#dcdcdc"></div>
<div style="position:absolute;left:664px;top:1352px;width:2px;height:25px;background:#dcdcdc"></div>
<div style="position:absolute;left:1121px;top:1352px;width:2px;height:25px;background:#dcdcdc"></div>
<div class="t" style="left:33.9px;top:1355.6px;font-size:19px;line-height:19px;font-weight:400;color:#2a2a2a;transform:scaleX(0.8610)">База даних: TASA3@TITAN</div>
<div class="t" style="left:332.4px;top:1355.6px;font-size:19px;line-height:19px;font-weight:400;color:#2a2a2a;transform:scaleX(0.8395)">Користувач: GIFT</div>
<div class="t" style="left:639.0px;top:1355.6px;font-size:19px;line-height:19px;font-weight:400;color:#2a2a2a;transform:scaleX(0.8491)">3</div>
<div class="t" style="left:669.6px;top:1355.6px;font-size:19px;line-height:19px;font-weight:400;color:#2a2a2a;transform:scaleX(0.8685)">Кассовый аппарат не подключен</div>
<div class="t" style="left:1126.0px;top:1355.6px;font-size:19px;line-height:19px;font-weight:400;color:#2a2a2a;transform:scaleX(0.8489)">Зона: Склад [1]</div>
<svg style="position:absolute;left:7.5px;top:1355px" width="19" height="21" viewBox="0 0 19 21"><defs><linearGradient id="dbg" x1="0" y1="0" x2="1" y2="1"><stop offset="0" stop-color="#e8e8ff"/><stop offset="0.5" stop-color="#a8a8c8"/><stop offset="1" stop-color="#6a6098"/></linearGradient></defs><path d="M1 1 L15 1 L18 3 L18 19 L4 21 L1 18 Z" fill="url(#dbg)"/><path d="M1.5 7 L18 7 M1.5 10.5 L18 10.5 M1.5 14 L18 14" stroke="#1a78e0" stroke-width="2"/></svg>
<svg style="position:absolute;left:307px;top:1354.8px" width="16" height="21" viewBox="0 0 16 21"><circle cx="6" cy="6.5" r="5" fill="#e83010"/><path d="M0.5 20 Q0 13 5 11.5 L11 11.5 Q16 13 15.5 20 Z" fill="#a8a8e0"/><circle cx="8.5" cy="7.5" r="4.6" fill="#9aa0dc"/><path d="M5.5 11 L8.5 14 L11.5 11 Z" fill="#e8a050"/></svg>
<svg style="position:absolute;left:610px;top:1353.7px" width="20" height="22" viewBox="0 0 20 22"><path d="M2 7.5 Q2 4 6 3.5 L17 4.5 L20 8 L20 16.5 L15 17 L12 13 L6 16 L2 16 Z" fill="#9898d0"/><path d="M5 3.5 L13 3 L13 4 L5 4.5 Z" fill="#7878c0"/><path d="M13 0.5 L17 7" stroke="#444" stroke-width="1.5"/><path d="M4.5 21.5 L7.5 12.5 M12 22 L14 14.5" stroke="#e8c030" stroke-width="2.6"/></svg>
<svg style="position:absolute;left:2004px;top:309px" width="28" height="26" viewBox="0 0 28 26"><path d="M4 21 L5.2 18.6 L22.6 2.6 L24.6 4.6 L7.2 20.6 Z" fill="#44b844" stroke="#2a8a2a" stroke-width="0.5"/><path d="M22.6 2.6 L24.6 4.6 L26 3.2 L24 1.2 Z" fill="#e87070"/><path d="M4 21 L5.2 18.6 L7.2 20.6 Z" fill="#e8c878"/><path d="M2 23.5 L4 21 L4.6 21.6 Z" fill="#333"/></svg>
<svg style="position:absolute;left:980px;top:1127px" width="22" height="22" viewBox="0 0 22 22"><path d="M0.5 1.5 Q0.5 0 2 0 L4 0 L4 9 L14 9 L14 0 L16.5 0 Q18.5 0 18.5 2 L18.5 12 L5 12 L5 18.5 L2 18.5 Q0.5 18.5 0.5 17 Z" fill="#1a66d0"/><rect x="4.2" y="0.3" width="9.6" height="8.5" fill="#f2f2f2"/><rect x="7" y="14" width="14" height="7" fill="#f0f0f0" stroke="#6a6a6a" stroke-width="1.6"/></svg>
<div style="position:absolute;left:0px;top:0px;width:3px;height:1381px;background:#000;z-index:90"></div>
<div style="position:absolute;left:2162px;top:0px;width:7px;height:1381px;background:#000;z-index:90"></div>
<div style="position:absolute;left:0px;top:1378px;width:2169px;height:3px;background:#000;z-index:90"></div>
</body></html>
